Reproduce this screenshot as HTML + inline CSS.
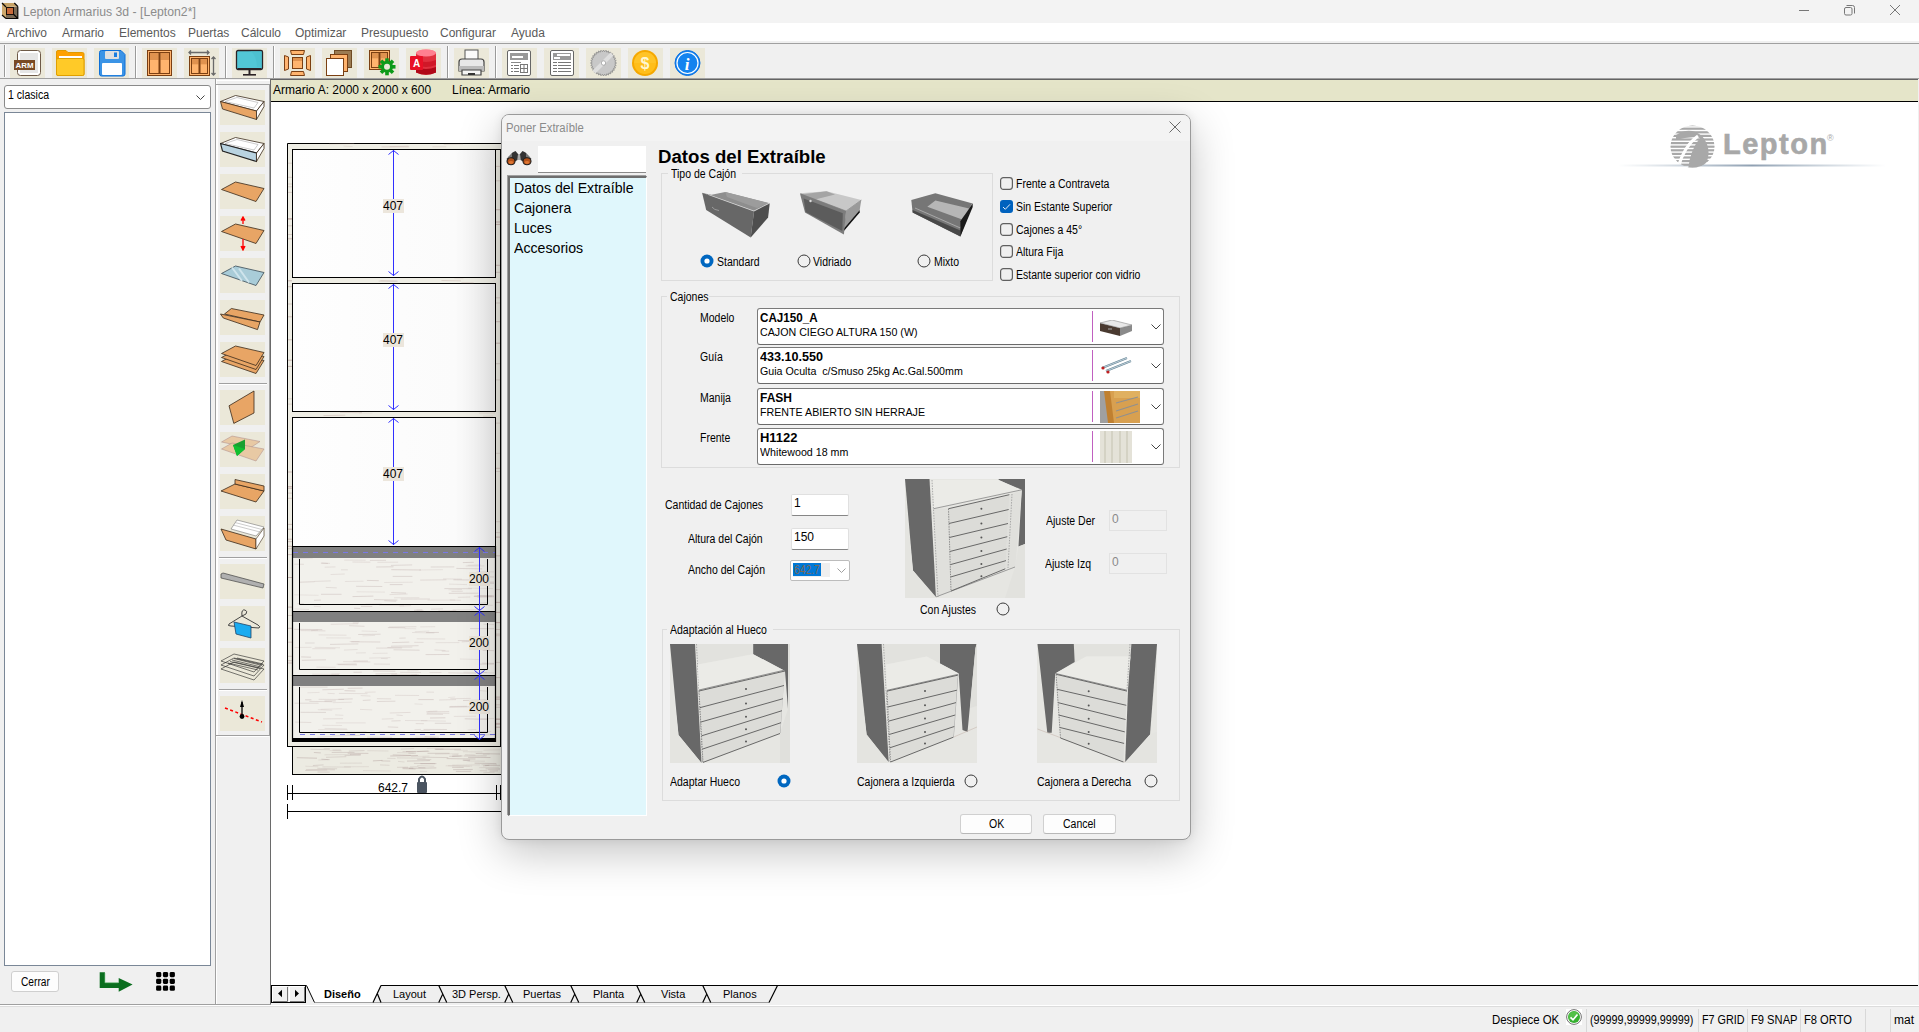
<!DOCTYPE html><html><head><meta charset="utf-8"><style>
*{margin:0;padding:0;box-sizing:border-box}
html,body{width:1919px;height:1032px;overflow:hidden;background:#f0f0f0}
body{font-family:"Liberation Sans",sans-serif;position:relative}
.a{position:absolute}
.t{white-space:nowrap}
</style></head><body>
<div class="a" style="left:0px;top:0px;width:1919px;height:23px;background:#f3f3f3"></div>
<svg class="a" style="left:0;top:0" width="20" height="21" viewBox="0 0 20 21">
<polygon points="2,3 14.3,3 17.8,6.5 6,7" fill="#c6a266"/>
<polygon points="2,3 6,7 6,18.5 2,15" fill="#cda86c"/>
<polygon points="13.5,7 17.8,6.5 17.8,18.5 13.5,14.3" fill="#7a6a55"/>
<polygon points="6,14.3 13.5,14.3 17.8,18.5 6,18.5" fill="#7a6a55"/>
<rect x="6.5" y="7.5" width="7" height="7" fill="#c86a3a" stroke="#1a1008" stroke-width="1"/>
<path d="M2 3 L6 7 M14.3 3 L17.8 6.5 M2 15 L6 18.5 M13.5 14.3 L17.8 18.5 M17.8 6.5 V18.5 H6" stroke="#0a0806" stroke-width="1.2" fill="none"/>
</svg>
<div class="a t" style="left:23px;top:6px;font-size:12px;line-height:12px;color:#8c8c8c;transform:scaleX(1.02);transform-origin:0 0;">Lepton Armarius 3d - [Lepton2*]</div>
<svg class="a" style="left:1795px;top:2px" width="120" height="16" viewBox="0 0 120 16">
<line x1="4" y1="8.5" x2="14" y2="8.5" stroke="#777" stroke-width="1"/>
<rect x="49.5" y="5.5" width="7.5" height="7.5" fill="none" stroke="#777" stroke-width="1" rx="1.5"/>
<path d="M51.5 3.5 H57.5 Q59.5 3.5 59.5 5.5 V11.5" fill="none" stroke="#777" stroke-width="1"/>
<line x1="95" y1="3" x2="105" y2="13" stroke="#777" stroke-width="1"/>
<line x1="105" y1="3" x2="95" y2="13" stroke="#777" stroke-width="1"/>
</svg>
<div class="a" style="left:0px;top:23px;width:1919px;height:18px;background:#fff"></div>
<div class="a" style="left:0px;top:41px;width:1919px;height:2px;background:#f0f0f0"></div>
<div class="a" style="left:0px;top:43px;width:1919px;height:1px;background:#a0a0a0"></div>
<div class="a t" style="left:7px;top:27px;font-size:12px;line-height:12px;color:#5a5a5a;">Archivo</div>
<div class="a t" style="left:62px;top:27px;font-size:12px;line-height:12px;color:#5a5a5a;">Armario</div>
<div class="a t" style="left:119px;top:27px;font-size:12px;line-height:12px;color:#5a5a5a;">Elementos</div>
<div class="a t" style="left:188px;top:27px;font-size:12px;line-height:12px;color:#5a5a5a;">Puertas</div>
<div class="a t" style="left:241px;top:27px;font-size:12px;line-height:12px;color:#5a5a5a;">Cálculo</div>
<div class="a t" style="left:295px;top:27px;font-size:12px;line-height:12px;color:#5a5a5a;">Optimizar</div>
<div class="a t" style="left:361px;top:27px;font-size:12px;line-height:12px;color:#5a5a5a;">Presupuesto</div>
<div class="a t" style="left:440px;top:27px;font-size:12px;line-height:12px;color:#5a5a5a;">Configurar</div>
<div class="a t" style="left:511px;top:27px;font-size:12px;line-height:12px;color:#5a5a5a;">Ayuda</div>
<div class="a" style="left:0px;top:44px;width:1919px;height:34px;background:#f0f0f0"></div>
<div class="a" style="left:0px;top:78px;width:1919px;height:1px;background:#a0a0a0"></div>
<div class="a" style="left:4px;top:45px;width:1px;height:32px;background:#9a9a9a"></div>
<div class="a" style="left:5px;top:45px;width:1px;height:32px;background:#fff"></div>
<div class="a" style="left:10px;top:48px;width:35px;height:30px;background:#ebe8d9"></div>
<div class="a" style="left:52px;top:48px;width:35px;height:30px;background:#ebe8d9"></div>
<div class="a" style="left:94px;top:48px;width:35px;height:30px;background:#ebe8d9"></div>
<div class="a" style="left:142px;top:48px;width:35px;height:30px;background:#ebe8d9"></div>
<div class="a" style="left:184px;top:48px;width:35px;height:30px;background:#ebe8d9"></div>
<div class="a" style="left:232px;top:48px;width:35px;height:30px;background:#ebe8d9"></div>
<div class="a" style="left:280px;top:48px;width:35px;height:30px;background:#ebe8d9"></div>
<div class="a" style="left:322px;top:48px;width:35px;height:30px;background:#ebe8d9"></div>
<div class="a" style="left:364px;top:48px;width:35px;height:30px;background:#ebe8d9"></div>
<div class="a" style="left:406px;top:48px;width:35px;height:30px;background:#ebe8d9"></div>
<div class="a" style="left:454px;top:48px;width:35px;height:30px;background:#ebe8d9"></div>
<div class="a" style="left:502px;top:48px;width:35px;height:30px;background:#ebe8d9"></div>
<div class="a" style="left:544px;top:48px;width:35px;height:30px;background:#ebe8d9"></div>
<div class="a" style="left:586px;top:48px;width:35px;height:30px;background:#ebe8d9"></div>
<div class="a" style="left:628px;top:48px;width:35px;height:30px;background:#ebe8d9"></div>
<div class="a" style="left:670px;top:48px;width:35px;height:30px;background:#ebe8d9"></div>
<div class="a" style="left:135px;top:46px;width:1px;height:32px;background:#9a9a9a"></div>
<div class="a" style="left:136px;top:46px;width:1px;height:32px;background:#fff"></div>
<div class="a" style="left:225px;top:46px;width:1px;height:32px;background:#9a9a9a"></div>
<div class="a" style="left:226px;top:46px;width:1px;height:32px;background:#fff"></div>
<div class="a" style="left:273px;top:46px;width:1px;height:32px;background:#9a9a9a"></div>
<div class="a" style="left:274px;top:46px;width:1px;height:32px;background:#fff"></div>
<div class="a" style="left:447px;top:46px;width:1px;height:32px;background:#9a9a9a"></div>
<div class="a" style="left:448px;top:46px;width:1px;height:32px;background:#fff"></div>
<div class="a" style="left:495px;top:46px;width:1px;height:32px;background:#9a9a9a"></div>
<div class="a" style="left:496px;top:46px;width:1px;height:32px;background:#fff"></div>
<svg class="a" style="left:10px;top:48px;" width="35" height="30" viewBox="0 0 35 30"><rect x="7.5" y="2.5" width="23" height="25" rx="3" fill="#fff" stroke="#6e5a48" stroke-width="1"/>
<rect x="10" y="5" width="18" height="20" fill="#e6e6e6"/>
<rect x="4" y="12" width="21" height="10" fill="#7a4a24"/>
<text x="14.5" y="20.2" font-family="Liberation Sans" font-weight="bold" font-size="8" fill="#fff" text-anchor="middle" textLength="18" lengthAdjust="spacingAndGlyphs">ARM</text></svg>
<svg class="a" style="left:52px;top:48px;" width="35" height="30" viewBox="0 0 35 30"><path d="M4.5 4 Q4.5 2.5 6 2.5 H14 L16 4.5 H30.5 Q32 4.5 32 6 V26 Q32 27.5 30.5 27.5 H6 Q4.5 27.5 4.5 26 Z" fill="#ffa000" stroke="#e09a00" stroke-width="1"/>
<rect x="7" y="8" width="23" height="2" fill="#fff"/>
<path d="M4.5 12 Q4.5 10.5 6 10.5 H30.5 Q32 10.5 32 12 V26 Q32 27.5 30.5 27.5 H6 Q4.5 27.5 4.5 26 Z" fill="#ffca28" stroke="#e0a000" stroke-width="1"/></svg>
<svg class="a" style="left:94px;top:48px;" width="35" height="30" viewBox="0 0 35 30"><path d="M5.5 4.5 Q5.5 2.5 7.5 2.5 H27 L31 6.5 V26 Q31 28 29 28 H7.5 Q5.5 28 5.5 26 Z" fill="#3b94e6" stroke="#0c6fd8" stroke-width="1"/>
<rect x="11" y="3" width="14" height="8" rx="1" fill="#e0e0e0"/>
<rect x="20" y="4.5" width="3" height="4.5" fill="#1a7de0"/>
<rect x="8" y="15" width="20" height="12" rx="1" fill="#fff"/></svg>
<svg class="a" style="left:142px;top:48px;" width="35" height="30" viewBox="0 0 35 30"><rect x="5.5" y="2.5" width="24" height="25" fill="#ffb46e" stroke="#7b3f12" stroke-width="1"/>
<rect x="7.5" y="4.5" width="20" height="21" fill="none" stroke="#7b3f12" stroke-width="1"/>
<rect x="8" y="5" width="8.5" height="7.000000000000001" fill="#e0924f"/>
<rect x="18.5" y="5" width="8.5" height="7.000000000000001" fill="#e0924f"/>
<line x1="17.5" y1="4" x2="17.5" y2="26" stroke="#7b3f12" stroke-width="2"/></svg>
<svg class="a" style="left:184px;top:48px;" width="35" height="30" viewBox="0 0 35 30"><rect x="5.5" y="8.5" width="20" height="19" fill="#ffb46e" stroke="#7b3f12" stroke-width="1"/>
<rect x="7.5" y="10.5" width="16" height="15" fill="none" stroke="#7b3f12" stroke-width="1"/>
<rect x="8" y="11" width="6.5" height="5.32" fill="#e0924f"/>
<rect x="16.5" y="11" width="6.5" height="5.32" fill="#e0924f"/>
<line x1="15.5" y1="10" x2="15.5" y2="26" stroke="#7b3f12" stroke-width="2"/><path d="M5 4.5 H25 M7 2.5 L5 4.5 L7 6.5 M23 2.5 L25 4.5 L23 6.5" stroke="#6a6a6a" stroke-width="1.3" fill="none"/>
<path d="M29.5 9 V27 M27.5 11 L29.5 9 L31.5 11 M27.5 25 L29.5 27 L31.5 25" stroke="#6a6a6a" stroke-width="1.3" fill="none"/></svg>
<svg class="a" style="left:232px;top:48px;" width="35" height="30" viewBox="0 0 35 30"><rect x="4.5" y="2.5" width="26" height="19" rx="1.5" fill="#52c6d6" stroke="#2b2226" stroke-width="1.3"/>
<path d="M5.5 20 H29.5 V22 H5.5Z" fill="#2b2226"/>
<path d="M15.5 3 Q24 3 25 19 H29.5 V3Z" fill="#4bbccc" opacity=".6"/>
<rect x="16.5" y="22" width="2" height="4" fill="#2b2226"/>
<rect x="11" y="26" width="13" height="1.6" fill="#2b2226"/></svg>
<svg class="a" style="left:280px;top:48px;" width="35" height="30" viewBox="0 0 35 30"><g fill="#ffb46e" stroke="#7b3f12" stroke-width="1">
<rect x="12.5" y="9.5" width="10" height="11"/>
<path d="M10.5 2.5 H24.5 L23.5 6.5 H11.5Z"/><path d="M10.5 27.5 H24.5 L23.5 23.5 H11.5Z"/>
<path d="M4.5 7.5 L8.5 9 V21 L4.5 22.5Z"/><path d="M30.5 7.5 L26.5 9 V21 L30.5 22.5Z"/></g>
<rect x="13" y="10" width="9" height="3" fill="#e0924f"/></svg>
<svg class="a" style="left:322px;top:48px;" width="35" height="30" viewBox="0 0 35 30"><rect x="12.5" y="2.5" width="17" height="17" fill="#9b7b52" stroke="#6e4a24"/>
<rect x="8.5" y="6.5" width="17" height="17" fill="#ffb46e" stroke="#7b3f12"/>
<rect x="4.5" y="10.5" width="17" height="17" fill="#fff" stroke="#7b3f12"/></svg>
<svg class="a" style="left:364px;top:48px;" width="35" height="30" viewBox="0 0 35 30"><rect x="5.5" y="2.5" width="20" height="19" fill="#ffb46e" stroke="#7b3f12" stroke-width="1"/>
<rect x="7.5" y="4.5" width="16" height="15" fill="none" stroke="#7b3f12" stroke-width="1"/>
<rect x="8" y="5" width="6.5" height="5.32" fill="#e0924f"/>
<rect x="16.5" y="5" width="6.5" height="5.32" fill="#e0924f"/>
<line x1="15.5" y1="4" x2="15.5" y2="20" stroke="#7b3f12" stroke-width="2"/><g transform="translate(23,18.8)"><rect x="-1.8" y="-8.5" width="3.6" height="4" fill="#0e9a1a" transform="rotate(0)"/><rect x="-1.8" y="-8.5" width="3.6" height="4" fill="#0e9a1a" transform="rotate(45)"/><rect x="-1.8" y="-8.5" width="3.6" height="4" fill="#0e9a1a" transform="rotate(90)"/><rect x="-1.8" y="-8.5" width="3.6" height="4" fill="#0e9a1a" transform="rotate(135)"/><rect x="-1.8" y="-8.5" width="3.6" height="4" fill="#0e9a1a" transform="rotate(180)"/><rect x="-1.8" y="-8.5" width="3.6" height="4" fill="#0e9a1a" transform="rotate(225)"/><rect x="-1.8" y="-8.5" width="3.6" height="4" fill="#0e9a1a" transform="rotate(270)"/><rect x="-1.8" y="-8.5" width="3.6" height="4" fill="#0e9a1a" transform="rotate(315)"/><circle r="6" fill="#0e9a1a"/><circle r="3" fill="#ebe8d9"/></g></svg>
<svg class="a" style="left:406px;top:48px;" width="35" height="30" viewBox="0 0 35 30"><ellipse cx="20" cy="5" rx="10" ry="3.5" fill="#ff7a8a"/>
<path d="M10 5 V24.5 Q20 29 30 24.5 V5 Q20 9 10 5Z" fill="#e0303e"/>
<path d="M10 12 Q20 16 30 12 V17 Q20 21 10 17Z" fill="#d01828"/>
<path d="M10 19 Q20 23 30 19 V24.5 Q20 29 10 24.5Z" fill="#b00818"/>
<ellipse cx="20" cy="5" rx="10" ry="3.5" fill="#ff8090"/>
<rect x="4" y="8" width="13" height="14" rx="1" fill="#e81026"/>
<text x="10.5" y="19" font-family="Liberation Sans" font-weight="bold" font-size="10" fill="#fff" text-anchor="middle">A</text></svg>
<svg class="a" style="left:454px;top:48px;" width="35" height="30" viewBox="0 0 35 30"><rect x="11" y="2" width="13" height="10" fill="#fafafa" stroke="#555" stroke-width="1"/>
<path d="M5 14 Q5 11 8 11 H27 Q30 11 30 14 V23 H5Z" fill="#e8e8e8" stroke="#444" stroke-width="1.2"/>
<rect x="5" y="18" width="25" height="5" fill="#bbb"/>
<path d="M8 22 H27 V27 H8Z" fill="#f5f5f5" stroke="#444" stroke-width="1.2"/>
<rect x="14" y="25" width="7" height="2" fill="#333"/></svg>
<svg class="a" style="left:502px;top:48px;" width="35" height="30" viewBox="0 0 35 30"><rect x="5.5" y="2.5" width="23" height="25" rx="1.5" fill="#fff" stroke="#666"/>
<rect x="8" y="5" width="18" height="7" fill="#999"/><rect x="10" y="8" width="11" height="2" fill="#fff"/>
<rect x="9" y="14" width="10" height="1" fill="#888"/>
<g fill="#777"><rect x="9" y="17" width="2" height="1"/><rect x="12" y="17" width="5" height="1"/><rect x="9" y="20" width="2" height="1"/><rect x="12" y="20" width="5" height="1"/><rect x="9" y="23" width="2" height="1"/><rect x="12" y="23" width="5" height="1"/></g>
<rect x="18.5" y="16.5" width="7" height="8" fill="none" stroke="#777"/><line x1="22" y1="17" x2="22" y2="24" stroke="#777"/><line x1="19" y1="20.5" x2="25" y2="20.5" stroke="#777"/></svg>
<svg class="a" style="left:544px;top:48px;" width="35" height="30" viewBox="0 0 35 30"><rect x="6.5" y="2.5" width="23" height="25" rx="1.5" fill="#fff" stroke="#666"/>
<rect x="9" y="5" width="18" height="7" fill="#999"/><rect x="13" y="6" width="13" height="2" fill="#fff"/><rect x="10" y="9" width="6" height="2" fill="#fff"/>
<g fill="#777"><rect x="9" y="14" width="4" height="1"/><rect x="14" y="14" width="13" height="1"/><rect x="9" y="17" width="4" height="1"/><rect x="14" y="17" width="13" height="1"/><rect x="9" y="20" width="4" height="1"/><rect x="14" y="20" width="13" height="1"/><rect x="9" y="23" width="4" height="1"/><rect x="14" y="23" width="13" height="1"/></g></svg>
<svg class="a" style="left:586px;top:48px;" width="35" height="30" viewBox="0 0 35 30"><polygon points="30.50,15.00 28.75,16.11 30.25,17.54 28.31,18.28 29.51,19.97 27.47,20.33 28.31,22.22 26.24,22.17 26.69,24.19 24.67,23.74 24.72,25.81 22.83,24.97 22.47,27.01 20.78,25.81 20.04,27.75 18.61,26.25 17.50,28.00 16.39,26.25 14.96,27.75 14.22,25.81 12.53,27.01 12.17,24.97 10.28,25.81 10.33,23.74 8.31,24.19 8.76,22.17 6.69,22.22 7.53,20.33 5.49,19.97 6.69,18.28 4.75,17.54 6.25,16.11 4.50,15.00 6.25,13.89 4.75,12.46 6.69,11.72 5.49,10.03 7.53,9.67 6.69,7.78 8.76,7.83 8.31,5.81 10.33,6.26 10.28,4.19 12.17,5.03 12.53,2.99 14.22,4.19 14.96,2.25 16.39,3.75 17.50,2.00 18.61,3.75 20.04,2.25 20.78,4.19 22.47,2.99 22.83,5.03 24.72,4.19 24.67,6.26 26.69,5.81 26.24,7.83 28.31,7.78 27.47,9.67 29.51,10.03 28.31,11.72 30.25,12.46 28.75,13.89" fill="#c8c8c8" stroke="#888" stroke-width=".8"/>
<path d="M8 24 L26 6" stroke="#dedede" stroke-width="4"/>
<circle cx="17.5" cy="15" r="2.2" fill="#fff" stroke="#888" stroke-width=".6"/></svg>
<svg class="a" style="left:628px;top:48px;" width="35" height="30" viewBox="0 0 35 30"><circle cx="17" cy="15" r="13" fill="#f5a800"/>
<circle cx="17" cy="15" r="11" fill="#ffbe1a"/>
<path d="M6 15 A11 11 0 0 1 28 15 Z" fill="#ffc933" opacity=".5"/>
<text x="17" y="21" font-family="Liberation Sans" font-weight="bold" font-size="16" fill="#fff7d0" text-anchor="middle">$</text></svg>
<svg class="a" style="left:670px;top:48px;" width="35" height="30" viewBox="0 0 35 30"><circle cx="17.5" cy="15" r="12.5" fill="#1483ef" stroke="#0b6fe0" stroke-width="1"/>
<circle cx="17.5" cy="15" r="10.5" fill="none" stroke="#fff" stroke-width="1.2"/>
<text x="17" y="21.5" font-family="Liberation Serif" font-style="italic" font-weight="bold" font-size="17" fill="#fff" text-anchor="middle">i</text></svg>
<div class="a" style="left:0px;top:79px;width:215px;height:925px;background:#f0f0f0"></div>
<div class="a" style="left:4px;top:85px;width:207px;height:24px;background:#fff;border:1px solid #8a8a8a;border-radius:3px"></div>
<div class="a t" style="left:8px;top:89px;font-size:12px;line-height:12px;color:#000;transform:scaleX(0.88);transform-origin:0 0;">1 clasica</div>
<svg class="a" style="left:195px;top:94px;" width="12" height="8" viewBox="0 0 12 8"><path d="M1.5 1.5 L5.5 5.5 L9.5 1.5" fill="none" stroke="#444" stroke-width="1"/></svg>
<div class="a" style="left:4px;top:112px;width:207px;height:854px;background:#fff;border:1px solid #7a8797"></div>
<div class="a" style="left:11px;top:971px;width:48px;height:21px;background:#fdfdfd;border:1px solid #cfcfcf;border-radius:3px"></div>
<div class="a t" style="left:21px;top:976px;font-size:12px;line-height:12px;color:#000;transform:scaleX(0.85);transform-origin:0 0;">Cerrar</div>
<svg class="a" style="left:98px;top:970px;" width="38" height="24" viewBox="0 0 38 24"><path d="M1.7 2.2 H6.9 V12.8 H20.7 V8 L34.6 14.6 L20.7 21.8 V18 H1.7 Z" fill="#0b6e1f"/><path d="M6.9 3 V12.8 H20" stroke="#5fc070" stroke-width=".8" fill="none" opacity=".6"/></svg>
<svg class="a" style="left:154px;top:970px;" width="24" height="24" viewBox="0 0 24 24"><rect x="2.1" y="2.0" width="5.2" height="5.2" rx="1.4" fill="#000"/><rect x="8.9" y="2.0" width="5.2" height="5.2" rx="1.4" fill="#000"/><rect x="15.7" y="2.0" width="5.2" height="5.2" rx="1.4" fill="#000"/><rect x="2.1" y="8.8" width="5.2" height="5.2" rx="1.4" fill="#000"/><rect x="8.9" y="8.8" width="5.2" height="5.2" rx="1.4" fill="#000"/><rect x="15.7" y="8.8" width="5.2" height="5.2" rx="1.4" fill="#000"/><rect x="2.1" y="15.6" width="5.2" height="5.2" rx="1.4" fill="#000"/><rect x="8.9" y="15.6" width="5.2" height="5.2" rx="1.4" fill="#000"/><rect x="15.7" y="15.6" width="5.2" height="5.2" rx="1.4" fill="#000"/></svg>
<div class="a" style="left:215px;top:79px;width:1px;height:925px;background:#a0a0a0"></div>
<div class="a" style="left:216px;top:79px;width:1px;height:925px;background:#fff"></div>
<div class="a" style="left:217px;top:79px;width:53px;height:925px;background:#f0f0f0"></div>
<div class="a" style="left:217px;top:80px;width:53px;height:1px;background:#fff"></div>
<div class="a" style="left:216px;top:84px;width:54px;height:1px;background:#a0a0a0"></div>
<div class="a" style="left:217px;top:85px;width:1px;height:650px;background:#fff"></div>
<div class="a" style="left:269px;top:84px;width:1px;height:651px;background:#a0a0a0"></div>
<div class="a" style="left:216px;top:735px;width:54px;height:1px;background:#a0a0a0"></div>
<div class="a" style="left:217px;top:736px;width:52px;height:1px;background:#fff"></div>
<div class="a" style="left:270px;top:79px;width:1px;height:925px;background:#6a6a6a"></div>
<div class="a" style="left:219px;top:383px;width:48px;height:1px;background:#a0a0a0"></div>
<div class="a" style="left:219px;top:384px;width:48px;height:1px;background:#fff"></div>
<div class="a" style="left:219px;top:557px;width:48px;height:1px;background:#a0a0a0"></div>
<div class="a" style="left:219px;top:558px;width:48px;height:1px;background:#fff"></div>
<div class="a" style="left:219px;top:689px;width:48px;height:1px;background:#a0a0a0"></div>
<div class="a" style="left:219px;top:690px;width:48px;height:1px;background:#fff"></div>
<div class="a" style="left:220px;top:90px;width:45px;height:35px;background:#ebe8d9"></div>
<div class="a" style="left:220px;top:132px;width:45px;height:35px;background:#ebe8d9"></div>
<div class="a" style="left:220px;top:174px;width:45px;height:35px;background:#ebe8d9"></div>
<div class="a" style="left:220px;top:216px;width:45px;height:35px;background:#ebe8d9"></div>
<div class="a" style="left:220px;top:258px;width:45px;height:35px;background:#ebe8d9"></div>
<div class="a" style="left:220px;top:300px;width:45px;height:35px;background:#ebe8d9"></div>
<div class="a" style="left:220px;top:342px;width:45px;height:35px;background:#ebe8d9"></div>
<div class="a" style="left:220px;top:390px;width:45px;height:35px;background:#ebe8d9"></div>
<div class="a" style="left:220px;top:432px;width:45px;height:35px;background:#ebe8d9"></div>
<div class="a" style="left:220px;top:474px;width:45px;height:35px;background:#ebe8d9"></div>
<div class="a" style="left:220px;top:516px;width:45px;height:35px;background:#ebe8d9"></div>
<div class="a" style="left:220px;top:564px;width:45px;height:35px;background:#ebe8d9"></div>
<div class="a" style="left:220px;top:606px;width:45px;height:35px;background:#ebe8d9"></div>
<div class="a" style="left:220px;top:648px;width:45px;height:35px;background:#ebe8d9"></div>
<div class="a" style="left:220px;top:696px;width:45px;height:35px;background:#ebe8d9"></div>
<svg class="a" style="left:220px;top:90px;" width="45" height="35" viewBox="0 0 45 35"><polygon points="15.5,5.5 44,11.5 36.5,21 0.5,11.5" fill="#fff" stroke="#3a2a1a" stroke-width=".8"/>
<polygon points="5,11.5 17,7.5 38,12.5 34,18" fill="#fff" stroke="#aaa" stroke-width=".6"/>
<polygon points="0.5,11.5 36.5,21 36.5,29.5 2.5,19" fill="#e8a565" stroke="#3a2a1a" stroke-width=".8"/>
<polygon points="36.5,21 44,11.5 44,16.5 36.5,29.5" fill="#fff" stroke="#3a2a1a" stroke-width=".8"/></svg>
<svg class="a" style="left:220px;top:132px;" width="45" height="35" viewBox="0 0 45 35"><polygon points="15.5,5.5 44,11.5 36.5,21 0.5,11.5" fill="#fff" stroke="#3a2a1a" stroke-width=".8"/>
<polygon points="5,11.5 17,7.5 38,12.5 34,18" fill="#fff" stroke="#aaa" stroke-width=".6"/>
<polygon points="0.5,11.5 36.5,21 36.5,29.5 2.5,19" fill="#b9d3e0" stroke="#222" stroke-width="1.1"/>
<polygon points="36.5,21 44,11.5 44,16.5 36.5,29.5" fill="#fff" stroke="#3a2a1a" stroke-width=".8"/></svg>
<svg class="a" style="left:220px;top:174px;" width="45" height="35" viewBox="0 0 45 35"><polygon points="1.5,15.5 15.5,8 44,14.5 36,27.5" fill="#e8a565" stroke="#3a2a1a" stroke-width=".8"/></svg>
<svg class="a" style="left:220px;top:216px;" width="45" height="35" viewBox="0 0 45 35"><polygon points="1.5,15.5 15.5,8 44,14.5 36,27.5" fill="#e8a565" stroke="#3a2a1a" stroke-width=".8"/><path d="M23 2 V8 M21 4.5 L23 1 L25 4.5 M23 23 V33 M21 30 L23 34 L25 30" stroke="#f00" stroke-width="1.3" fill="#f00"/></svg>
<svg class="a" style="left:220px;top:258px;" width="45" height="35" viewBox="0 0 45 35"><polygon points="1.5,15.5 15.5,8 44,14.5 36,27.5" fill="#a9ccd8" stroke="#3a4a55" stroke-width=".8"/><path d="M12 9.5 L22 23 M19 10.5 L29 24.5" stroke="#cfe4ec" stroke-width="2"/></svg>
<svg class="a" style="left:220px;top:300px;" width="45" height="35" viewBox="0 0 45 35"><polygon points="11.4,8.5 44,15 40,22 4.5,14" fill="#e8a565" stroke="#3a2a1a" stroke-width=".8"/><polygon points="0.5,14 40,22 37.5,29.6 3.3,18" fill="#e8a565" stroke="#3a2a1a" stroke-width=".8"/></svg>
<svg class="a" style="left:220px;top:342px;" width="45" height="35" viewBox="0 0 45 35"><polygon points="1.5,19.5 15.5,12 44,18.5 36,31.5" fill="#e8a565" stroke="#3a2a1a" stroke-width=".8"/>
<polygon points="1.5,15.5 15.5,8 44,14.5 36,27.5" fill="#e8a565" stroke="#3a2a1a" stroke-width=".8"/>
<polygon points="1.5,11.5 15.5,4 44,10.5 36,23.5" fill="#e8a565" stroke="#3a2a1a" stroke-width=".8"/></svg>
<svg class="a" style="left:220px;top:390px;" width="45" height="35" viewBox="0 0 45 35"><polygon points="9,15.8 34,1 34,23 13.8,33.4" fill="#e8a565" stroke="#3a2a1a" stroke-width=".8"/></svg>
<svg class="a" style="left:220px;top:432px;" width="45" height="35" viewBox="0 0 45 35"><polygon points="1.5,10 12,4 40,9.5 30,16" fill="#e8c9a4" stroke="#a88" stroke-width=".5"/>
<polygon points="1.5,17 12,11 44,17 36,29" fill="#e8c9a4" stroke="#a88" stroke-width=".5"/>
<polygon points="13,13 25,7.5 25,17 17,24" fill="#18a030"/><polygon points="13,13 25,17 17,24" fill="#10c030"/></svg>
<svg class="a" style="left:220px;top:474px;" width="45" height="35" viewBox="0 0 45 35"><polygon points="1,17 15,10 44,17 36,28" fill="#e8a565" stroke="#3a2a1a" stroke-width=".8"/><polygon points="15,5.5 44,12 44,17 15,10" fill="#e8a565" stroke="#3a2a1a" stroke-width=".8"/></svg>
<svg class="a" style="left:220px;top:516px;" width="45" height="35" viewBox="0 0 45 35"><polygon points="17,4 44,11 36,20 11,13" fill="#fff" stroke="#777" stroke-width=".6"/>
<path d="M13 9 L40 16 M15 6.5 L42 13.5" stroke="#aaa" stroke-width=".6"/>
<polygon points="1,13 36,23 36,33 6,24" fill="#e8a565" stroke="#3a2a1a" stroke-width=".8"/>
<polygon points="36,23 44,12 44,20 36,33" fill="#fff" stroke="#3a2a1a" stroke-width=".6"/></svg>
<svg class="a" style="left:220px;top:564px;" width="45" height="35" viewBox="0 0 45 35"><polygon points="1,10 3,9 44,20 43,24 1,14" fill="#b0b0b0" stroke="#444" stroke-width=".7"/></svg>
<svg class="a" style="left:220px;top:606px;" width="45" height="35" viewBox="0 0 45 35"><path d="M22 10 Q21 3 25 4 Q28 5 26 8 L22 10 L9 18 Q7 20 11 20 L39 22 Q41 21 38 19 Z" fill="none" stroke="#333" stroke-width=".9"/>
<polygon points="14,16 31,20 31,32 16,28" fill="#1aabf0" stroke="#246" stroke-width=".8"/></svg>
<svg class="a" style="left:220px;top:648px;" width="45" height="35" viewBox="0 0 45 35"><g fill="none" stroke="#222" stroke-width=".6"><polygon points="1,13 14,6 44,13 34,24"/><polygon points="1,17 14,10 44,17 34,28"/><polygon points="1,21 14,14 44,21 34,32"/>
<path d="M8 15 L38 22 M10 13.5 L40 20.5 M12 12 L41 19 M14 10.5 L42 17.5 M17 10 L43 16"/></g></svg>
<svg class="a" style="left:220px;top:696px;" width="45" height="35" viewBox="0 0 45 35"><path d="M5 12 L42 26" stroke="#f00" stroke-width="1.5" stroke-dasharray="3,2.5"/><path d="M22 20 V6" stroke="#000" stroke-width="1.3"/><polygon points="20,11 22,4 24,11" fill="#000"/><circle cx="22" cy="20.5" r="2.4" fill="#000"/></svg>
<div class="a" style="left:271px;top:79px;width:1648px;height:1px;background:#646464"></div>
<div class="a" style="left:271px;top:80px;width:1648px;height:21px;background:#e5e5c9"></div>
<div class="a" style="left:271px;top:101px;width:1648px;height:1px;background:#000"></div>
<div class="a t" style="left:273px;top:84px;font-size:12px;line-height:12px;color:#000;">Armario A: 2000 x 2000 x 600</div>
<div class="a t" style="left:452px;top:84px;font-size:12px;line-height:12px;color:#000;">Línea: Armario</div>
<div class="a" style="left:271px;top:102px;width:1647px;height:883px;background:#fff"></div>
<div class="a" style="left:1918px;top:79px;width:1px;height:925px;background:#f0f0f0"></div>
<svg class="a" style="left:0;top:0" width="1919" height="1032" viewBox="0 0 1919 1032">
<defs><clipPath id="lc"><ellipse cx="1692.5" cy="146.5" rx="22" ry="21"/></clipPath>
<linearGradient id="lg" x1="0" x2="1"><stop offset="0" stop-color="#9fb0c0" stop-opacity="0"/><stop offset=".5" stop-color="#8fa0b2"/><stop offset="1" stop-color="#9fb0c0" stop-opacity="0"/></linearGradient></defs>
<rect x="1618" y="164.5" width="268" height="2" fill="url(#lg)"/>
<g clip-path="url(#lc)"><rect x="1668" y="124.0" width="50" height="2.2" fill="#a8a8a8"/><rect x="1668" y="127.6" width="50" height="2.2" fill="#a8a8a8"/><rect x="1668" y="131.2" width="50" height="2.2" fill="#a8a8a8"/><rect x="1668" y="134.8" width="50" height="2.2" fill="#a8a8a8"/><rect x="1668" y="138.4" width="50" height="2.2" fill="#a8a8a8"/><rect x="1668" y="142.0" width="50" height="2.2" fill="#a8a8a8"/><rect x="1668" y="145.6" width="50" height="2.2" fill="#a8a8a8"/><rect x="1668" y="149.2" width="50" height="2.2" fill="#a8a8a8"/><rect x="1668" y="152.8" width="50" height="2.2" fill="#a8a8a8"/><rect x="1668" y="156.4" width="50" height="2.2" fill="#a8a8a8"/><rect x="1668" y="160.0" width="50" height="2.2" fill="#a8a8a8"/><rect x="1668" y="163.6" width="50" height="2.2" fill="#a8a8a8"/><rect x="1668" y="167.2" width="50" height="2.2" fill="#a8a8a8"/>
<path d="M1676 135 Q1690 126 1702 136 Q1714 150 1704 168 L1688 170 Q1690 150 1700 138 Q1690 136 1676 140Z" fill="#a8a8a8"/>
<path d="M1678 168 Q1684 146 1698 136" stroke="#fff" stroke-width="3" fill="none"/>
</g></svg>
<div class="a t" style="left:1723px;top:130px;font-size:29px;line-height:29px;color:#a8a8a8;font-weight:bold;letter-spacing:1.5px;-webkit-text-stroke:.6px #a8a8a8">Lepton</div>
<div class="a t" style="left:1827px;top:134px;font-size:9px;line-height:9px;color:#a8a8a8;">®</div>
<div class="a" style="left:271px;top:985px;width:1647px;height:20px;background:#f0f0f0"></div>
<div class="a" style="left:271px;top:985px;width:1647px;height:1px;background:#000"></div>
<svg class="a" style="left:0;top:0" width="1919" height="1032" viewBox="0 0 1919 1032">
<polygon points="306.5,985 315,1002.5 373,1002.5 381,985" fill="#fff"/>
<rect x="306.5" y="984" width="74" height="2" fill="#fff"/>
<polygon points="381,986 377.5,994 380.5,1002.5 768.75,1002.5 777.5,986" fill="#efefef"/>
<path d="M306.5 985.5 L314.5 1002.5 H769" stroke="#000" stroke-width="1" fill="none"/>
<path d="M314.5 1002.5 H769" stroke="#a0a0a0" stroke-width="1.2" fill="none"/>
<path d="M373 1002.5 L381 985.5 M377.5 994 L381 1002.5 M769 1002.5 L777.5 985.5" stroke="#000" stroke-width="1.2" fill="none"/>
<path d="M438.75 985.5 L446.75 1002.5 M438.75 1002.5 L442.75 994" stroke="#000" stroke-width="1.2" fill="none"/><path d="M504.75 985.5 L512.75 1002.5 M504.75 1002.5 L508.75 994" stroke="#000" stroke-width="1.2" fill="none"/><path d="M570.75 985.5 L578.75 1002.5 M570.75 1002.5 L574.75 994" stroke="#000" stroke-width="1.2" fill="none"/><path d="M636.75 985.5 L644.75 1002.5 M636.75 1002.5 L640.75 994" stroke="#000" stroke-width="1.2" fill="none"/><path d="M702.75 985.5 L710.75 1002.5 M702.75 1002.5 L706.75 994" stroke="#000" stroke-width="1.2" fill="none"/><rect x="271" y="985" width="35" height="18" fill="#000"/>
<rect x="272" y="986" width="17" height="16" fill="#f0f0f0"/><rect x="289" y="986" width="16" height="16" fill="#f0f0f0"/>
<path d="M272.5 1001 V986.5 H287 M289.5 1001 V986.5 H304" stroke="#fff" stroke-width="1" fill="none"/>
<path d="M273 1001.5 H287.5 V987 M290 1001.5 H304.5 V987" stroke="#777" stroke-width="1" fill="none"/>
<polygon points="278,993.5 282,989.8 282,997.2" fill="#000"/>
<polygon points="299,993.5 295,989.8 295,997.2" fill="#000"/>
</svg>
<div class="a t" style="left:324px;top:989px;font-size:11px;line-height:11px;color:#000;font-weight:bold;">Diseño</div>
<div class="a t" style="left:393px;top:989px;font-size:11px;line-height:11px;color:#000;">Layout</div>
<div class="a t" style="left:452px;top:989px;font-size:11px;line-height:11px;color:#000;">3D Persp.</div>
<div class="a t" style="left:523px;top:989px;font-size:11px;line-height:11px;color:#000;">Puertas</div>
<div class="a t" style="left:593px;top:989px;font-size:11px;line-height:11px;color:#000;">Planta</div>
<div class="a t" style="left:661px;top:989px;font-size:11px;line-height:11px;color:#000;">Vista</div>
<div class="a t" style="left:723px;top:989px;font-size:11px;line-height:11px;color:#000;">Planos</div>
<div class="a" style="left:0px;top:1004px;width:271px;height:1px;background:#a0a0a0"></div>
<div class="a" style="left:0px;top:1005px;width:1919px;height:1px;background:#fff"></div>
<div class="a" style="left:0px;top:1006px;width:1919px;height:1px;background:#dcdcdc"></div>
<div class="a" style="left:0px;top:1007px;width:1919px;height:25px;background:#f0f0f0"></div>
<div class="a" style="left:1586px;top:1009px;width:1px;height:23px;background:#d8d8d8"></div>
<div class="a" style="left:1698px;top:1009px;width:1px;height:23px;background:#d8d8d8"></div>
<div class="a" style="left:1747px;top:1009px;width:1px;height:23px;background:#d8d8d8"></div>
<div class="a" style="left:1800px;top:1009px;width:1px;height:23px;background:#d8d8d8"></div>
<div class="a" style="left:1865px;top:1009px;width:1px;height:23px;background:#d8d8d8"></div>
<div class="a" style="left:1890px;top:1009px;width:1px;height:23px;background:#d8d8d8"></div>
<div class="a t" style="left:1492px;top:1014px;font-size:12px;line-height:12px;color:#000;transform:scaleX(0.95);transform-origin:0 0;">Despiece OK</div>
<svg class="a" style="left:1566px;top:1009px;" width="16" height="16" viewBox="0 0 16 16"><rect width="16" height="16" fill="#fff"/>
<circle cx="8" cy="8" r="7.4" fill="#fff" stroke="#707070" stroke-width="1"/>
<circle cx="8" cy="8" r="6" fill="#36b030"/>
<path d="M2.5 8 A6 6 0 0 1 13 4.5 L3 11Z" fill="#6fd060" opacity=".5"/>
<path d="M4.5 8.3 L7 10.8 L11.5 5.5" stroke="#fff" stroke-width="1.7" fill="none"/></svg>
<div class="a t" style="left:1590px;top:1014px;font-size:12px;line-height:12px;color:#000;transform:scaleX(0.9);transform-origin:0 0;">(99999,99999,99999)</div>
<div class="a t" style="left:1702px;top:1014px;font-size:12px;line-height:12px;color:#000;transform:scaleX(0.9);transform-origin:0 0;">F7 GRID</div>
<div class="a t" style="left:1751px;top:1014px;font-size:12px;line-height:12px;color:#000;transform:scaleX(0.93);transform-origin:0 0;">F9 SNAP</div>
<div class="a t" style="left:1804px;top:1014px;font-size:12px;line-height:12px;color:#000;transform:scaleX(0.93);transform-origin:0 0;">F8 ORTO</div>
<div class="a t" style="left:1894px;top:1014px;font-size:12px;line-height:12px;color:#000;">mat</div>
<svg class="a" style="left:0;top:0" width="1919" height="1032" viewBox="0 0 1919 1032"><defs><linearGradient id="ig" x1="0" x2="1"><stop offset="0" stop-color="#fefefe"/><stop offset=".8" stop-color="#fbfbfb"/><stop offset="1" stop-color="#f1f1f1"/></linearGradient></defs><rect x="287" y="143" width="214" height="604" fill="#eeede4"/><path d="M287.5 747 V143.5 H501" stroke="#000" stroke-width="1" fill="none"/><line x1="500.5" y1="149" x2="500.5" y2="747" stroke="#000" stroke-width="1"/><line x1="495" y1="149.5" x2="501" y2="149.5" stroke="#000" stroke-width="1"/><line x1="288" y1="339.8" x2="292" y2="339.8" stroke="#a07878" stroke-opacity="0.40" stroke-width="1"/><line x1="288" y1="192.4" x2="292" y2="192.4" stroke="#a07878" stroke-opacity="0.31" stroke-width="1"/><line x1="288" y1="184.0" x2="292" y2="184.0" stroke="#a07878" stroke-opacity="0.21" stroke-width="1"/><line x1="288" y1="404.1" x2="292" y2="404.1" stroke="#a07878" stroke-opacity="0.23" stroke-width="1"/><line x1="288" y1="398.8" x2="292" y2="398.8" stroke="#a07878" stroke-opacity="0.24" stroke-width="1"/><line x1="288" y1="280.8" x2="292" y2="280.8" stroke="#a07878" stroke-opacity="0.48" stroke-width="1"/><line x1="288" y1="488.2" x2="292" y2="488.2" stroke="#a07878" stroke-opacity="0.49" stroke-width="1"/><line x1="288" y1="177.3" x2="292" y2="177.3" stroke="#a07878" stroke-opacity="0.29" stroke-width="1"/><line x1="288" y1="234.5" x2="292" y2="234.5" stroke="#a07878" stroke-opacity="0.29" stroke-width="1"/><line x1="288" y1="628.3" x2="292" y2="628.3" stroke="#a07878" stroke-opacity="0.37" stroke-width="1"/><line x1="288" y1="524.4" x2="292" y2="524.4" stroke="#a07878" stroke-opacity="0.36" stroke-width="1"/><line x1="288" y1="186.8" x2="292" y2="186.8" stroke="#a07878" stroke-opacity="0.26" stroke-width="1"/><line x1="288" y1="548.7" x2="292" y2="548.7" stroke="#a07878" stroke-opacity="0.29" stroke-width="1"/><line x1="288" y1="493.1" x2="292" y2="493.1" stroke="#a07878" stroke-opacity="0.29" stroke-width="1"/><line x1="288" y1="615.5" x2="292" y2="615.5" stroke="#a07878" stroke-opacity="0.27" stroke-width="1"/><line x1="288" y1="486.6" x2="292" y2="486.6" stroke="#a07878" stroke-opacity="0.46" stroke-width="1"/><line x1="288" y1="577.5" x2="292" y2="577.5" stroke="#a07878" stroke-opacity="0.49" stroke-width="1"/><line x1="288" y1="219.2" x2="292" y2="219.2" stroke="#a07878" stroke-opacity="0.43" stroke-width="1"/><line x1="288" y1="239.1" x2="292" y2="239.1" stroke="#a07878" stroke-opacity="0.21" stroke-width="1"/><line x1="288" y1="541.6" x2="292" y2="541.6" stroke="#a07878" stroke-opacity="0.37" stroke-width="1"/><line x1="288" y1="663.0" x2="292" y2="663.0" stroke="#a07878" stroke-opacity="0.41" stroke-width="1"/><line x1="288" y1="498.3" x2="292" y2="498.3" stroke="#a07878" stroke-opacity="0.34" stroke-width="1"/><line x1="288" y1="642.2" x2="292" y2="642.2" stroke="#a07878" stroke-opacity="0.34" stroke-width="1"/><line x1="288" y1="539.2" x2="292" y2="539.2" stroke="#a07878" stroke-opacity="0.41" stroke-width="1"/><line x1="288" y1="529.2" x2="292" y2="529.2" stroke="#a07878" stroke-opacity="0.45" stroke-width="1"/><line x1="288" y1="316.8" x2="292" y2="316.8" stroke="#a07878" stroke-opacity="0.40" stroke-width="1"/><line x1="288" y1="163.2" x2="292" y2="163.2" stroke="#a07878" stroke-opacity="0.25" stroke-width="1"/><line x1="288" y1="218.6" x2="292" y2="218.6" stroke="#a07878" stroke-opacity="0.43" stroke-width="1"/><line x1="288" y1="225.8" x2="292" y2="225.8" stroke="#a07878" stroke-opacity="0.32" stroke-width="1"/><line x1="288" y1="660.7" x2="292" y2="660.7" stroke="#a07878" stroke-opacity="0.33" stroke-width="1"/><line x1="288" y1="472.0" x2="292" y2="472.0" stroke="#a07878" stroke-opacity="0.45" stroke-width="1"/><line x1="288" y1="656.3" x2="292" y2="656.3" stroke="#a07878" stroke-opacity="0.32" stroke-width="1"/><line x1="288" y1="360.2" x2="292" y2="360.2" stroke="#a07878" stroke-opacity="0.49" stroke-width="1"/><line x1="288" y1="238.4" x2="292" y2="238.4" stroke="#a07878" stroke-opacity="0.27" stroke-width="1"/><line x1="288" y1="286.7" x2="292" y2="286.7" stroke="#a07878" stroke-opacity="0.38" stroke-width="1"/><line x1="288" y1="304.0" x2="292" y2="304.0" stroke="#a07878" stroke-opacity="0.33" stroke-width="1"/><line x1="288" y1="366.4" x2="292" y2="366.4" stroke="#a07878" stroke-opacity="0.49" stroke-width="1"/><line x1="288" y1="554.6" x2="292" y2="554.6" stroke="#a07878" stroke-opacity="0.39" stroke-width="1"/><line x1="288" y1="546.3" x2="292" y2="546.3" stroke="#a07878" stroke-opacity="0.47" stroke-width="1"/><line x1="288" y1="607.1" x2="292" y2="607.1" stroke="#a07878" stroke-opacity="0.44" stroke-width="1"/><line x1="496" y1="379.9" x2="500" y2="379.9" stroke="#a07878" stroke-opacity="0.23" stroke-width="1"/><line x1="496" y1="521.7" x2="500" y2="521.7" stroke="#a07878" stroke-opacity="0.22" stroke-width="1"/><line x1="496" y1="272.3" x2="500" y2="272.3" stroke="#a07878" stroke-opacity="0.30" stroke-width="1"/><line x1="496" y1="180.8" x2="500" y2="180.8" stroke="#a07878" stroke-opacity="0.25" stroke-width="1"/><line x1="496" y1="209.5" x2="500" y2="209.5" stroke="#a07878" stroke-opacity="0.21" stroke-width="1"/><line x1="496" y1="662.4" x2="500" y2="662.4" stroke="#a07878" stroke-opacity="0.24" stroke-width="1"/><line x1="496" y1="297.8" x2="500" y2="297.8" stroke="#a07878" stroke-opacity="0.31" stroke-width="1"/><line x1="496" y1="222.0" x2="500" y2="222.0" stroke="#a07878" stroke-opacity="0.50" stroke-width="1"/><line x1="496" y1="423.1" x2="500" y2="423.1" stroke="#a07878" stroke-opacity="0.23" stroke-width="1"/><line x1="496" y1="209.9" x2="500" y2="209.9" stroke="#a07878" stroke-opacity="0.28" stroke-width="1"/><line x1="496" y1="635.7" x2="500" y2="635.7" stroke="#a07878" stroke-opacity="0.21" stroke-width="1"/><line x1="496" y1="707.3" x2="500" y2="707.3" stroke="#a07878" stroke-opacity="0.24" stroke-width="1"/><line x1="496" y1="468.3" x2="500" y2="468.3" stroke="#a07878" stroke-opacity="0.36" stroke-width="1"/><line x1="496" y1="723.4" x2="500" y2="723.4" stroke="#a07878" stroke-opacity="0.41" stroke-width="1"/><line x1="496" y1="303.0" x2="500" y2="303.0" stroke="#a07878" stroke-opacity="0.25" stroke-width="1"/><line x1="496" y1="602.4" x2="500" y2="602.4" stroke="#a07878" stroke-opacity="0.43" stroke-width="1"/><line x1="496" y1="343.2" x2="500" y2="343.2" stroke="#a07878" stroke-opacity="0.44" stroke-width="1"/><line x1="496" y1="727.2" x2="500" y2="727.2" stroke="#a07878" stroke-opacity="0.44" stroke-width="1"/><line x1="496" y1="629.5" x2="500" y2="629.5" stroke="#a07878" stroke-opacity="0.27" stroke-width="1"/><line x1="496" y1="453.3" x2="500" y2="453.3" stroke="#a07878" stroke-opacity="0.21" stroke-width="1"/><line x1="496" y1="166.4" x2="500" y2="166.4" stroke="#a07878" stroke-opacity="0.28" stroke-width="1"/><line x1="496" y1="555.8" x2="500" y2="555.8" stroke="#a07878" stroke-opacity="0.33" stroke-width="1"/><line x1="496" y1="699.1" x2="500" y2="699.1" stroke="#a07878" stroke-opacity="0.49" stroke-width="1"/><line x1="496" y1="363.7" x2="500" y2="363.7" stroke="#a07878" stroke-opacity="0.27" stroke-width="1"/><line x1="496" y1="265.3" x2="500" y2="265.3" stroke="#a07878" stroke-opacity="0.39" stroke-width="1"/><line x1="496" y1="677.6" x2="500" y2="677.6" stroke="#a07878" stroke-opacity="0.34" stroke-width="1"/><line x1="496" y1="532.6" x2="500" y2="532.6" stroke="#a07878" stroke-opacity="0.23" stroke-width="1"/><line x1="496" y1="537.1" x2="500" y2="537.1" stroke="#a07878" stroke-opacity="0.43" stroke-width="1"/><line x1="496" y1="589.6" x2="500" y2="589.6" stroke="#a07878" stroke-opacity="0.25" stroke-width="1"/><line x1="496" y1="612.4" x2="500" y2="612.4" stroke="#a07878" stroke-opacity="0.44" stroke-width="1"/><line x1="496" y1="719.4" x2="500" y2="719.4" stroke="#a07878" stroke-opacity="0.32" stroke-width="1"/><line x1="496" y1="704.8" x2="500" y2="704.8" stroke="#a07878" stroke-opacity="0.25" stroke-width="1"/><line x1="496" y1="224.4" x2="500" y2="224.4" stroke="#a07878" stroke-opacity="0.47" stroke-width="1"/><line x1="496" y1="622.6" x2="500" y2="622.6" stroke="#a07878" stroke-opacity="0.45" stroke-width="1"/><line x1="496" y1="724.5" x2="500" y2="724.5" stroke="#a07878" stroke-opacity="0.31" stroke-width="1"/><line x1="496" y1="471.5" x2="500" y2="471.5" stroke="#a07878" stroke-opacity="0.20" stroke-width="1"/><line x1="496" y1="718.9" x2="500" y2="718.9" stroke="#a07878" stroke-opacity="0.36" stroke-width="1"/><line x1="496" y1="697.1" x2="500" y2="697.1" stroke="#a07878" stroke-opacity="0.46" stroke-width="1"/><line x1="496" y1="634.1" x2="500" y2="634.1" stroke="#a07878" stroke-opacity="0.28" stroke-width="1"/><line x1="496" y1="321.7" x2="500" y2="321.7" stroke="#a07878" stroke-opacity="0.38" stroke-width="1"/><line x1="343.5" y1="146.1" x2="352.7" y2="146.6" stroke="#b89a98" stroke-opacity="0.22" stroke-width="1"/><line x1="381.5" y1="146.9" x2="409.2" y2="146.8" stroke="#b89a98" stroke-opacity="0.33" stroke-width="1"/><line x1="389.8" y1="146.7" x2="408.4" y2="146.1" stroke="#b89a98" stroke-opacity="0.24" stroke-width="1"/><line x1="329.0" y1="144.0" x2="354.2" y2="143.6" stroke="#b89a98" stroke-opacity="0.24" stroke-width="1"/><line x1="432.5" y1="146.8" x2="446.3" y2="146.8" stroke="#b89a98" stroke-opacity="0.26" stroke-width="1"/><line x1="443.8" y1="144.5" x2="463.2" y2="144.2" stroke="#b89a98" stroke-opacity="0.21" stroke-width="1"/><rect x="292.5" y="149.5" width="203" height="128" fill="url(#ig)" stroke="#000" stroke-width="1"/><rect x="292.5" y="283.5" width="203" height="128" fill="url(#ig)" stroke="#000" stroke-width="1"/><rect x="292.5" y="417.5" width="203" height="129" fill="url(#ig)" stroke="#000" stroke-width="1"/><line x1="441.5" y1="280.5" x2="461.0" y2="280.9" stroke="#b89a98" stroke-opacity="0.33" stroke-width="1"/><line x1="378.7" y1="281.1" x2="396.8" y2="281.1" stroke="#b89a98" stroke-opacity="0.29" stroke-width="1"/><line x1="380.4" y1="280.7" x2="397.9" y2="281.2" stroke="#b89a98" stroke-opacity="0.29" stroke-width="1"/><line x1="461.4" y1="282.7" x2="473.6" y2="282.8" stroke="#b89a98" stroke-opacity="0.34" stroke-width="1"/><line x1="454.4" y1="278.7" x2="463.4" y2="278.6" stroke="#b89a98" stroke-opacity="0.16" stroke-width="1"/><line x1="340.0" y1="412.4" x2="362.0" y2="412.7" stroke="#b89a98" stroke-opacity="0.33" stroke-width="1"/><line x1="323.5" y1="415.6" x2="345.3" y2="415.2" stroke="#b89a98" stroke-opacity="0.33" stroke-width="1"/><line x1="478.8" y1="413.1" x2="495.0" y2="413.0" stroke="#b89a98" stroke-opacity="0.25" stroke-width="1"/><line x1="483.1" y1="416.2" x2="492.9" y2="416.1" stroke="#b89a98" stroke-opacity="0.25" stroke-width="1"/><line x1="358.8" y1="413.0" x2="372.4" y2="413.2" stroke="#b89a98" stroke-opacity="0.15" stroke-width="1"/><rect x="293" y="547" width="202" height="194" fill="#f2f1ec"/><line x1="399.3" y1="638.2" x2="405.7" y2="638.0" stroke="#a89090" stroke-opacity="0.24" stroke-width="1"/><line x1="391.3" y1="569.7" x2="421.0" y2="570.0" stroke="#a89090" stroke-opacity="0.30" stroke-width="1"/><line x1="313.9" y1="606.3" x2="320.9" y2="606.7" stroke="#a89090" stroke-opacity="0.19" stroke-width="1"/><line x1="318.6" y1="634.9" x2="346.5" y2="635.2" stroke="#a89090" stroke-opacity="0.19" stroke-width="1"/><line x1="322.4" y1="725.3" x2="342.1" y2="725.5" stroke="#a89090" stroke-opacity="0.16" stroke-width="1"/><line x1="304.9" y1="683.3" x2="321.1" y2="682.7" stroke="#a89090" stroke-opacity="0.29" stroke-width="1"/><line x1="414.5" y1="703.9" x2="422.6" y2="704.3" stroke="#a89090" stroke-opacity="0.16" stroke-width="1"/><line x1="457.9" y1="640.6" x2="472.1" y2="640.7" stroke="#a89090" stroke-opacity="0.29" stroke-width="1"/><line x1="344.9" y1="581.5" x2="363.5" y2="581.2" stroke="#a89090" stroke-opacity="0.17" stroke-width="1"/><line x1="324.7" y1="567.2" x2="335.5" y2="566.9" stroke="#a89090" stroke-opacity="0.20" stroke-width="1"/><line x1="438.3" y1="610.8" x2="456.3" y2="610.4" stroke="#a89090" stroke-opacity="0.20" stroke-width="1"/><line x1="297.5" y1="603.6" x2="303.8" y2="603.9" stroke="#a89090" stroke-opacity="0.23" stroke-width="1"/><line x1="330.0" y1="644.4" x2="358.4" y2="643.9" stroke="#a89090" stroke-opacity="0.27" stroke-width="1"/><line x1="376.1" y1="648.1" x2="402.1" y2="648.0" stroke="#a89090" stroke-opacity="0.23" stroke-width="1"/><line x1="424.7" y1="736.8" x2="438.9" y2="737.2" stroke="#a89090" stroke-opacity="0.26" stroke-width="1"/><line x1="414.8" y1="631.7" x2="429.2" y2="631.1" stroke="#a89090" stroke-opacity="0.17" stroke-width="1"/><line x1="307.4" y1="692.8" x2="319.6" y2="692.4" stroke="#a89090" stroke-opacity="0.16" stroke-width="1"/><line x1="453.8" y1="716.4" x2="475.9" y2="716.2" stroke="#a89090" stroke-opacity="0.19" stroke-width="1"/><line x1="349.7" y1="641.6" x2="359.5" y2="641.6" stroke="#a89090" stroke-opacity="0.19" stroke-width="1"/><line x1="476.7" y1="735.0" x2="494.0" y2="734.7" stroke="#a89090" stroke-opacity="0.29" stroke-width="1"/><line x1="352.8" y1="622.9" x2="358.8" y2="622.8" stroke="#a89090" stroke-opacity="0.22" stroke-width="1"/><line x1="389.5" y1="594.6" x2="407.6" y2="594.0" stroke="#a89090" stroke-opacity="0.19" stroke-width="1"/><line x1="311.1" y1="630.7" x2="318.1" y2="630.1" stroke="#a89090" stroke-opacity="0.20" stroke-width="1"/><line x1="338.2" y1="664.6" x2="356.9" y2="664.9" stroke="#a89090" stroke-opacity="0.25" stroke-width="1"/><line x1="430.0" y1="718.0" x2="445.4" y2="717.8" stroke="#a89090" stroke-opacity="0.30" stroke-width="1"/><line x1="322.4" y1="689.8" x2="343.8" y2="689.2" stroke="#a89090" stroke-opacity="0.28" stroke-width="1"/><line x1="463.5" y1="672.2" x2="487.1" y2="672.5" stroke="#a89090" stroke-opacity="0.17" stroke-width="1"/><line x1="393.5" y1="649.8" x2="419.6" y2="650.2" stroke="#a89090" stroke-opacity="0.27" stroke-width="1"/><line x1="405.0" y1="720.5" x2="427.4" y2="720.7" stroke="#a89090" stroke-opacity="0.18" stroke-width="1"/><line x1="299.9" y1="582.2" x2="314.6" y2="581.7" stroke="#a89090" stroke-opacity="0.28" stroke-width="1"/><line x1="400.1" y1="672.3" x2="421.1" y2="672.5" stroke="#a89090" stroke-opacity="0.22" stroke-width="1"/><line x1="294.6" y1="703.2" x2="318.6" y2="703.2" stroke="#a89090" stroke-opacity="0.23" stroke-width="1"/><line x1="419.3" y1="570.0" x2="442.9" y2="569.7" stroke="#a89090" stroke-opacity="0.16" stroke-width="1"/><line x1="344.5" y1="690.7" x2="355.4" y2="691.0" stroke="#a89090" stroke-opacity="0.30" stroke-width="1"/><line x1="387.9" y1="627.6" x2="405.3" y2="627.8" stroke="#a89090" stroke-opacity="0.27" stroke-width="1"/><line x1="411.2" y1="675.0" x2="419.1" y2="674.6" stroke="#a89090" stroke-opacity="0.19" stroke-width="1"/><line x1="435.2" y1="613.4" x2="454.8" y2="612.8" stroke="#a89090" stroke-opacity="0.16" stroke-width="1"/><line x1="345.1" y1="680.3" x2="367.7" y2="680.5" stroke="#a89090" stroke-opacity="0.19" stroke-width="1"/><line x1="392.1" y1="642.6" x2="409.3" y2="642.1" stroke="#a89090" stroke-opacity="0.28" stroke-width="1"/><line x1="331.9" y1="736.0" x2="360.3" y2="735.4" stroke="#a89090" stroke-opacity="0.22" stroke-width="1"/><line x1="449.8" y1="734.2" x2="466.6" y2="733.9" stroke="#a89090" stroke-opacity="0.18" stroke-width="1"/><line x1="473.7" y1="596.3" x2="493.6" y2="595.9" stroke="#a89090" stroke-opacity="0.23" stroke-width="1"/><line x1="475.0" y1="582.1" x2="494.0" y2="582.1" stroke="#a89090" stroke-opacity="0.28" stroke-width="1"/><line x1="427.6" y1="600.1" x2="455.2" y2="600.1" stroke="#a89090" stroke-opacity="0.15" stroke-width="1"/><line x1="294.7" y1="647.5" x2="311.5" y2="647.3" stroke="#a89090" stroke-opacity="0.17" stroke-width="1"/><line x1="359.4" y1="615.5" x2="385.5" y2="614.9" stroke="#a89090" stroke-opacity="0.26" stroke-width="1"/><line x1="453.4" y1="579.8" x2="481.7" y2="580.1" stroke="#a89090" stroke-opacity="0.29" stroke-width="1"/><line x1="349.1" y1="625.7" x2="364.5" y2="626.3" stroke="#a89090" stroke-opacity="0.24" stroke-width="1"/><line x1="362.5" y1="635.9" x2="375.1" y2="635.4" stroke="#a89090" stroke-opacity="0.17" stroke-width="1"/><line x1="452.6" y1="610.0" x2="481.0" y2="609.7" stroke="#a89090" stroke-opacity="0.19" stroke-width="1"/><line x1="391.1" y1="592.6" x2="406.0" y2="593.1" stroke="#a89090" stroke-opacity="0.28" stroke-width="1"/><line x1="448.3" y1="672.8" x2="476.2" y2="673.4" stroke="#a89090" stroke-opacity="0.23" stroke-width="1"/><line x1="430.7" y1="567.0" x2="454.3" y2="566.9" stroke="#a89090" stroke-opacity="0.26" stroke-width="1"/><line x1="416.5" y1="610.1" x2="423.6" y2="610.6" stroke="#a89090" stroke-opacity="0.17" stroke-width="1"/><line x1="383.7" y1="620.5" x2="396.9" y2="620.8" stroke="#a89090" stroke-opacity="0.30" stroke-width="1"/><line x1="343.4" y1="677.4" x2="356.7" y2="677.5" stroke="#a89090" stroke-opacity="0.21" stroke-width="1"/><line x1="325.8" y1="587.4" x2="336.8" y2="587.9" stroke="#a89090" stroke-opacity="0.22" stroke-width="1"/><line x1="335.8" y1="722.9" x2="365.7" y2="722.9" stroke="#a89090" stroke-opacity="0.17" stroke-width="1"/><line x1="330.6" y1="574.5" x2="344.8" y2="574.0" stroke="#a89090" stroke-opacity="0.19" stroke-width="1"/><line x1="343.1" y1="661.7" x2="370.4" y2="662.0" stroke="#a89090" stroke-opacity="0.21" stroke-width="1"/><line x1="372.6" y1="653.4" x2="387.7" y2="653.2" stroke="#a89090" stroke-opacity="0.16" stroke-width="1"/><line x1="346.7" y1="734.1" x2="355.7" y2="734.1" stroke="#a89090" stroke-opacity="0.24" stroke-width="1"/><line x1="457.9" y1="597.3" x2="470.4" y2="597.0" stroke="#a89090" stroke-opacity="0.21" stroke-width="1"/><line x1="378.7" y1="731.6" x2="405.1" y2="732.1" stroke="#a89090" stroke-opacity="0.15" stroke-width="1"/><line x1="300.1" y1="687.1" x2="327.6" y2="687.1" stroke="#a89090" stroke-opacity="0.24" stroke-width="1"/><line x1="294.0" y1="629.3" x2="322.3" y2="629.6" stroke="#a89090" stroke-opacity="0.28" stroke-width="1"/><line x1="478.7" y1="603.2" x2="487.3" y2="602.8" stroke="#a89090" stroke-opacity="0.23" stroke-width="1"/><line x1="423.6" y1="729.4" x2="446.9" y2="729.5" stroke="#a89090" stroke-opacity="0.26" stroke-width="1"/><line x1="380.9" y1="658.4" x2="387.8" y2="658.7" stroke="#a89090" stroke-opacity="0.18" stroke-width="1"/><line x1="468.8" y1="675.5" x2="482.1" y2="675.0" stroke="#a89090" stroke-opacity="0.19" stroke-width="1"/><line x1="414.9" y1="685.1" x2="423.6" y2="684.6" stroke="#a89090" stroke-opacity="0.23" stroke-width="1"/><line x1="404.7" y1="628.6" x2="416.1" y2="628.8" stroke="#a89090" stroke-opacity="0.15" stroke-width="1"/><line x1="351.3" y1="641.8" x2="380.3" y2="642.0" stroke="#a89090" stroke-opacity="0.28" stroke-width="1"/><line x1="384.3" y1="600.7" x2="396.2" y2="601.3" stroke="#a89090" stroke-opacity="0.26" stroke-width="1"/><line x1="352.4" y1="562.0" x2="370.4" y2="562.2" stroke="#a89090" stroke-opacity="0.21" stroke-width="1"/><line x1="342.9" y1="679.5" x2="371.1" y2="679.1" stroke="#a89090" stroke-opacity="0.16" stroke-width="1"/><line x1="358.2" y1="634.5" x2="380.6" y2="634.2" stroke="#a89090" stroke-opacity="0.27" stroke-width="1"/><line x1="434.4" y1="649.9" x2="445.4" y2="650.5" stroke="#a89090" stroke-opacity="0.20" stroke-width="1"/><line x1="449.8" y1="600.0" x2="461.1" y2="600.3" stroke="#a89090" stroke-opacity="0.19" stroke-width="1"/><line x1="474.9" y1="648.2" x2="485.4" y2="647.9" stroke="#a89090" stroke-opacity="0.21" stroke-width="1"/><line x1="420.4" y1="730.7" x2="429.9" y2="730.5" stroke="#a89090" stroke-opacity="0.18" stroke-width="1"/><line x1="479.1" y1="583.8" x2="486.3" y2="583.3" stroke="#a89090" stroke-opacity="0.21" stroke-width="1"/><line x1="464.7" y1="718.8" x2="488.2" y2="719.4" stroke="#a89090" stroke-opacity="0.29" stroke-width="1"/><line x1="356.6" y1="591.8" x2="385.0" y2="592.1" stroke="#a89090" stroke-opacity="0.15" stroke-width="1"/><line x1="420.2" y1="626.9" x2="435.2" y2="626.7" stroke="#a89090" stroke-opacity="0.18" stroke-width="1"/><line x1="294.5" y1="608.9" x2="309.0" y2="609.5" stroke="#a89090" stroke-opacity="0.17" stroke-width="1"/><line x1="477.2" y1="595.7" x2="491.8" y2="596.1" stroke="#a89090" stroke-opacity="0.27" stroke-width="1"/><line x1="376.2" y1="567.0" x2="393.5" y2="566.8" stroke="#a89090" stroke-opacity="0.29" stroke-width="1"/><line x1="330.7" y1="624.3" x2="358.2" y2="623.7" stroke="#a89090" stroke-opacity="0.21" stroke-width="1"/><line x1="448.2" y1="697.5" x2="455.2" y2="697.0" stroke="#a89090" stroke-opacity="0.16" stroke-width="1"/><line x1="468.8" y1="604.8" x2="492.7" y2="605.3" stroke="#a89090" stroke-opacity="0.20" stroke-width="1"/><line x1="345.7" y1="732.3" x2="366.5" y2="732.0" stroke="#a89090" stroke-opacity="0.26" stroke-width="1"/><line x1="354.1" y1="608.2" x2="360.2" y2="608.5" stroke="#a89090" stroke-opacity="0.29" stroke-width="1"/><line x1="414.5" y1="729.7" x2="421.0" y2="729.4" stroke="#a89090" stroke-opacity="0.22" stroke-width="1"/><line x1="475.8" y1="731.6" x2="491.1" y2="731.3" stroke="#a89090" stroke-opacity="0.21" stroke-width="1"/><line x1="387.8" y1="726.9" x2="398.2" y2="727.3" stroke="#a89090" stroke-opacity="0.26" stroke-width="1"/><line x1="450.3" y1="698.7" x2="470.9" y2="698.4" stroke="#a89090" stroke-opacity="0.20" stroke-width="1"/><line x1="362.8" y1="700.4" x2="370.6" y2="700.0" stroke="#a89090" stroke-opacity="0.26" stroke-width="1"/><line x1="341.0" y1="569.8" x2="347.8" y2="569.8" stroke="#a89090" stroke-opacity="0.20" stroke-width="1"/><line x1="480.2" y1="718.8" x2="494.0" y2="718.5" stroke="#a89090" stroke-opacity="0.16" stroke-width="1"/><line x1="312.3" y1="648.7" x2="335.4" y2="648.7" stroke="#a89090" stroke-opacity="0.19" stroke-width="1"/><line x1="373.2" y1="670.9" x2="395.4" y2="671.2" stroke="#a89090" stroke-opacity="0.28" stroke-width="1"/><line x1="420.2" y1="580.1" x2="446.4" y2="579.8" stroke="#a89090" stroke-opacity="0.24" stroke-width="1"/><line x1="364.9" y1="692.3" x2="375.6" y2="692.0" stroke="#a89090" stroke-opacity="0.19" stroke-width="1"/><line x1="323.1" y1="718.9" x2="343.0" y2="718.7" stroke="#a89090" stroke-opacity="0.21" stroke-width="1"/><line x1="482.6" y1="650.3" x2="494.0" y2="650.7" stroke="#a89090" stroke-opacity="0.25" stroke-width="1"/><line x1="482.3" y1="576.6" x2="494.0" y2="577.0" stroke="#a89090" stroke-opacity="0.28" stroke-width="1"/><line x1="467.7" y1="565.3" x2="480.8" y2="564.9" stroke="#a89090" stroke-opacity="0.18" stroke-width="1"/><line x1="478.9" y1="664.1" x2="494.0" y2="664.0" stroke="#a89090" stroke-opacity="0.28" stroke-width="1"/><line x1="379.3" y1="605.3" x2="404.0" y2="605.8" stroke="#a89090" stroke-opacity="0.17" stroke-width="1"/><line x1="407.3" y1="670.8" x2="418.5" y2="670.7" stroke="#a89090" stroke-opacity="0.17" stroke-width="1"/><line x1="332.8" y1="604.4" x2="353.1" y2="604.6" stroke="#a89090" stroke-opacity="0.18" stroke-width="1"/><line x1="296.2" y1="617.6" x2="318.4" y2="617.2" stroke="#a89090" stroke-opacity="0.20" stroke-width="1"/><line x1="332.6" y1="702.7" x2="351.8" y2="702.2" stroke="#a89090" stroke-opacity="0.17" stroke-width="1"/><line x1="369.1" y1="658.1" x2="390.4" y2="657.6" stroke="#a89090" stroke-opacity="0.17" stroke-width="1"/><line x1="426.1" y1="632.6" x2="438.9" y2="632.4" stroke="#a89090" stroke-opacity="0.29" stroke-width="1"/><line x1="353.3" y1="661.1" x2="367.9" y2="661.0" stroke="#a89090" stroke-opacity="0.28" stroke-width="1"/><line x1="483.4" y1="624.2" x2="494.0" y2="624.5" stroke="#a89090" stroke-opacity="0.18" stroke-width="1"/><line x1="295.1" y1="722.1" x2="311.3" y2="722.5" stroke="#a89090" stroke-opacity="0.21" stroke-width="1"/><line x1="461.7" y1="641.9" x2="471.6" y2="641.3" stroke="#a89090" stroke-opacity="0.23" stroke-width="1"/><line x1="415.7" y1="723.6" x2="423.9" y2="723.7" stroke="#a89090" stroke-opacity="0.21" stroke-width="1"/><line x1="389.8" y1="584.6" x2="402.6" y2="584.6" stroke="#a89090" stroke-opacity="0.29" stroke-width="1"/><line x1="314.7" y1="647.3" x2="340.0" y2="647.8" stroke="#a89090" stroke-opacity="0.18" stroke-width="1"/><line x1="318.1" y1="729.6" x2="347.5" y2="729.6" stroke="#a89090" stroke-opacity="0.16" stroke-width="1"/><line x1="470.0" y1="628.6" x2="494.0" y2="628.7" stroke="#a89090" stroke-opacity="0.27" stroke-width="1"/><line x1="324.5" y1="701.0" x2="335.8" y2="700.9" stroke="#a89090" stroke-opacity="0.28" stroke-width="1"/><line x1="451.5" y1="591.3" x2="462.8" y2="591.2" stroke="#a89090" stroke-opacity="0.23" stroke-width="1"/><line x1="366.9" y1="580.4" x2="378.8" y2="580.7" stroke="#a89090" stroke-opacity="0.28" stroke-width="1"/><line x1="301.8" y1="660.3" x2="326.0" y2="659.8" stroke="#a89090" stroke-opacity="0.28" stroke-width="1"/><line x1="316.4" y1="667.1" x2="335.6" y2="667.3" stroke="#a89090" stroke-opacity="0.20" stroke-width="1"/><line x1="373.8" y1="664.0" x2="390.0" y2="664.2" stroke="#a89090" stroke-opacity="0.22" stroke-width="1"/><line x1="377.3" y1="562.3" x2="398.1" y2="562.2" stroke="#a89090" stroke-opacity="0.19" stroke-width="1"/><line x1="439.1" y1="700.0" x2="456.1" y2="699.6" stroke="#a89090" stroke-opacity="0.22" stroke-width="1"/><line x1="314.3" y1="581.4" x2="330.7" y2="580.9" stroke="#a89090" stroke-opacity="0.22" stroke-width="1"/><line x1="390.9" y1="565.4" x2="412.2" y2="564.9" stroke="#a89090" stroke-opacity="0.26" stroke-width="1"/><line x1="441.8" y1="651.1" x2="449.1" y2="651.1" stroke="#a89090" stroke-opacity="0.21" stroke-width="1"/><line x1="474.7" y1="582.8" x2="494.0" y2="583.4" stroke="#a89090" stroke-opacity="0.26" stroke-width="1"/><line x1="448.8" y1="593.3" x2="478.4" y2="593.2" stroke="#a89090" stroke-opacity="0.29" stroke-width="1"/><line x1="468.0" y1="588.1" x2="493.0" y2="588.6" stroke="#a89090" stroke-opacity="0.16" stroke-width="1"/><line x1="360.7" y1="695.6" x2="370.5" y2="696.1" stroke="#a89090" stroke-opacity="0.19" stroke-width="1"/><line x1="449.0" y1="584.1" x2="467.0" y2="584.6" stroke="#a89090" stroke-opacity="0.18" stroke-width="1"/><line x1="343.9" y1="650.1" x2="357.6" y2="649.5" stroke="#a89090" stroke-opacity="0.18" stroke-width="1"/><line x1="324.6" y1="728.4" x2="346.9" y2="728.9" stroke="#a89090" stroke-opacity="0.18" stroke-width="1"/><line x1="443.1" y1="578.9" x2="461.9" y2="579.1" stroke="#a89090" stroke-opacity="0.20" stroke-width="1"/><line x1="459.9" y1="659.0" x2="479.8" y2="659.5" stroke="#a89090" stroke-opacity="0.17" stroke-width="1"/><line x1="482.7" y1="672.6" x2="494.0" y2="673.0" stroke="#a89090" stroke-opacity="0.19" stroke-width="1"/><line x1="482.2" y1="663.1" x2="494.0" y2="663.4" stroke="#a89090" stroke-opacity="0.22" stroke-width="1"/><line x1="327.6" y1="693.3" x2="334.7" y2="693.7" stroke="#a89090" stroke-opacity="0.19" stroke-width="1"/><line x1="415.5" y1="737.1" x2="435.5" y2="737.3" stroke="#a89090" stroke-opacity="0.20" stroke-width="1"/><line x1="294.3" y1="564.2" x2="303.9" y2="564.3" stroke="#a89090" stroke-opacity="0.21" stroke-width="1"/><line x1="391.4" y1="721.0" x2="400.6" y2="720.7" stroke="#a89090" stroke-opacity="0.25" stroke-width="1"/><line x1="298.2" y1="558.5" x2="312.8" y2="558.0" stroke="#a89090" stroke-opacity="0.20" stroke-width="1"/><line x1="336.6" y1="664.2" x2="356.7" y2="663.9" stroke="#a89090" stroke-opacity="0.24" stroke-width="1"/><line x1="384.2" y1="582.5" x2="412.7" y2="582.2" stroke="#a89090" stroke-opacity="0.17" stroke-width="1"/><line x1="312.2" y1="674.2" x2="339.1" y2="674.5" stroke="#a89090" stroke-opacity="0.21" stroke-width="1"/><line x1="344.2" y1="560.1" x2="365.7" y2="560.2" stroke="#a89090" stroke-opacity="0.20" stroke-width="1"/><line x1="416.7" y1="638.8" x2="445.2" y2="639.0" stroke="#a89090" stroke-opacity="0.19" stroke-width="1"/><line x1="465.7" y1="566.0" x2="484.4" y2="565.9" stroke="#a89090" stroke-opacity="0.19" stroke-width="1"/><line x1="305.1" y1="699.8" x2="311.4" y2="699.8" stroke="#a89090" stroke-opacity="0.29" stroke-width="1"/><line x1="321.0" y1="594.3" x2="341.6" y2="594.3" stroke="#a89090" stroke-opacity="0.25" stroke-width="1"/><line x1="448.5" y1="589.8" x2="462.0" y2="589.5" stroke="#a89090" stroke-opacity="0.16" stroke-width="1"/><line x1="463.0" y1="700.5" x2="486.1" y2="699.9" stroke="#a89090" stroke-opacity="0.28" stroke-width="1"/><line x1="435.6" y1="642.7" x2="459.4" y2="642.6" stroke="#a89090" stroke-opacity="0.18" stroke-width="1"/><line x1="314.0" y1="600.3" x2="320.9" y2="600.1" stroke="#a89090" stroke-opacity="0.26" stroke-width="1"/><line x1="426.1" y1="711.9" x2="449.2" y2="711.6" stroke="#a89090" stroke-opacity="0.23" stroke-width="1"/><line x1="376.9" y1="701.5" x2="395.4" y2="701.2" stroke="#a89090" stroke-opacity="0.25" stroke-width="1"/><line x1="477.4" y1="597.5" x2="494.0" y2="596.9" stroke="#a89090" stroke-opacity="0.19" stroke-width="1"/><line x1="338.9" y1="693.4" x2="367.5" y2="693.7" stroke="#a89090" stroke-opacity="0.20" stroke-width="1"/><line x1="461.2" y1="617.8" x2="473.0" y2="618.3" stroke="#a89090" stroke-opacity="0.24" stroke-width="1"/><line x1="425.6" y1="679.1" x2="455.1" y2="679.0" stroke="#a89090" stroke-opacity="0.28" stroke-width="1"/><line x1="426.5" y1="714.1" x2="443.0" y2="714.3" stroke="#a89090" stroke-opacity="0.24" stroke-width="1"/><line x1="352.5" y1="596.6" x2="373.4" y2="596.1" stroke="#a89090" stroke-opacity="0.29" stroke-width="1"/><line x1="321.5" y1="562.9" x2="330.0" y2="563.4" stroke="#a89090" stroke-opacity="0.20" stroke-width="1"/><line x1="320.9" y1="563.2" x2="327.9" y2="563.5" stroke="#a89090" stroke-opacity="0.25" stroke-width="1"/><line x1="426.4" y1="692.1" x2="434.0" y2="692.2" stroke="#a89090" stroke-opacity="0.20" stroke-width="1"/><line x1="449.3" y1="707.2" x2="476.7" y2="706.6" stroke="#a89090" stroke-opacity="0.28" stroke-width="1"/><line x1="467.7" y1="729.9" x2="476.3" y2="729.5" stroke="#a89090" stroke-opacity="0.17" stroke-width="1"/><line x1="300.5" y1="712.3" x2="326.0" y2="712.4" stroke="#a89090" stroke-opacity="0.27" stroke-width="1"/><line x1="414.0" y1="610.3" x2="422.4" y2="609.8" stroke="#a89090" stroke-opacity="0.26" stroke-width="1"/><line x1="332.9" y1="616.1" x2="349.1" y2="615.5" stroke="#a89090" stroke-opacity="0.19" stroke-width="1"/><line x1="347.7" y1="688.3" x2="362.5" y2="688.1" stroke="#a89090" stroke-opacity="0.29" stroke-width="1"/><line x1="389.7" y1="713.0" x2="410.5" y2="712.4" stroke="#a89090" stroke-opacity="0.21" stroke-width="1"/><line x1="376.9" y1="698.7" x2="391.2" y2="698.9" stroke="#a89090" stroke-opacity="0.23" stroke-width="1"/><line x1="335.1" y1="714.9" x2="343.3" y2="715.3" stroke="#a89090" stroke-opacity="0.18" stroke-width="1"/><line x1="294.2" y1="594.8" x2="318.5" y2="595.3" stroke="#a89090" stroke-opacity="0.15" stroke-width="1"/><line x1="387.3" y1="647.5" x2="412.4" y2="647.1" stroke="#a89090" stroke-opacity="0.22" stroke-width="1"/><line x1="360.0" y1="709.4" x2="372.2" y2="709.9" stroke="#a89090" stroke-opacity="0.19" stroke-width="1"/><line x1="334.8" y1="685.3" x2="352.8" y2="684.8" stroke="#a89090" stroke-opacity="0.25" stroke-width="1"/><line x1="309.4" y1="701.4" x2="332.1" y2="701.7" stroke="#a89090" stroke-opacity="0.24" stroke-width="1"/><line x1="361.6" y1="631.0" x2="377.0" y2="631.5" stroke="#a89090" stroke-opacity="0.16" stroke-width="1"/><line x1="462.8" y1="562.6" x2="473.8" y2="562.3" stroke="#a89090" stroke-opacity="0.29" stroke-width="1"/><line x1="389.2" y1="627.0" x2="416.4" y2="626.7" stroke="#a89090" stroke-opacity="0.22" stroke-width="1"/><line x1="395.0" y1="695.3" x2="419.1" y2="695.5" stroke="#a89090" stroke-opacity="0.20" stroke-width="1"/><line x1="356.1" y1="586.3" x2="382.3" y2="586.5" stroke="#a89090" stroke-opacity="0.26" stroke-width="1"/><line x1="326.2" y1="637.9" x2="350.8" y2="638.0" stroke="#a89090" stroke-opacity="0.17" stroke-width="1"/><line x1="381.8" y1="719.1" x2="393.5" y2="718.7" stroke="#a89090" stroke-opacity="0.20" stroke-width="1"/><line x1="427.6" y1="711.5" x2="437.3" y2="711.1" stroke="#a89090" stroke-opacity="0.19" stroke-width="1"/><line x1="356.0" y1="653.0" x2="365.9" y2="652.8" stroke="#a89090" stroke-opacity="0.18" stroke-width="1"/><line x1="479.3" y1="690.6" x2="487.7" y2="691.2" stroke="#a89090" stroke-opacity="0.17" stroke-width="1"/><line x1="367.0" y1="737.1" x2="392.1" y2="737.3" stroke="#a89090" stroke-opacity="0.22" stroke-width="1"/><line x1="331.3" y1="674.1" x2="339.8" y2="673.8" stroke="#a89090" stroke-opacity="0.21" stroke-width="1"/><line x1="300.4" y1="630.6" x2="325.4" y2="630.9" stroke="#a89090" stroke-opacity="0.23" stroke-width="1"/><line x1="414.2" y1="642.3" x2="423.6" y2="642.4" stroke="#a89090" stroke-opacity="0.21" stroke-width="1"/><line x1="434.8" y1="723.3" x2="451.1" y2="723.3" stroke="#a89090" stroke-opacity="0.26" stroke-width="1"/><line x1="374.0" y1="599.6" x2="397.4" y2="600.1" stroke="#a89090" stroke-opacity="0.27" stroke-width="1"/><line x1="427.0" y1="713.1" x2="449.3" y2="713.3" stroke="#a89090" stroke-opacity="0.22" stroke-width="1"/><line x1="353.5" y1="672.3" x2="361.8" y2="672.2" stroke="#a89090" stroke-opacity="0.27" stroke-width="1"/><line x1="429.5" y1="672.6" x2="441.5" y2="672.5" stroke="#a89090" stroke-opacity="0.22" stroke-width="1"/><line x1="412.1" y1="632.5" x2="434.3" y2="633.0" stroke="#a89090" stroke-opacity="0.18" stroke-width="1"/><line x1="418.4" y1="699.6" x2="433.7" y2="699.6" stroke="#a89090" stroke-opacity="0.30" stroke-width="1"/><line x1="301.2" y1="656.9" x2="311.1" y2="657.2" stroke="#a89090" stroke-opacity="0.29" stroke-width="1"/><line x1="392.7" y1="576.4" x2="412.4" y2="576.4" stroke="#a89090" stroke-opacity="0.26" stroke-width="1"/><line x1="391.3" y1="674.3" x2="417.2" y2="674.4" stroke="#a89090" stroke-opacity="0.21" stroke-width="1"/><line x1="474.1" y1="596.2" x2="494.0" y2="596.1" stroke="#a89090" stroke-opacity="0.26" stroke-width="1"/><line x1="317.3" y1="737.2" x2="331.8" y2="736.6" stroke="#a89090" stroke-opacity="0.19" stroke-width="1"/><line x1="369.9" y1="560.4" x2="386.0" y2="560.3" stroke="#a89090" stroke-opacity="0.25" stroke-width="1"/><line x1="360.9" y1="606.3" x2="372.3" y2="606.5" stroke="#a89090" stroke-opacity="0.29" stroke-width="1"/><line x1="394.1" y1="597.8" x2="419.4" y2="597.7" stroke="#a89090" stroke-opacity="0.18" stroke-width="1"/><line x1="318.6" y1="699.3" x2="344.0" y2="699.5" stroke="#a89090" stroke-opacity="0.22" stroke-width="1"/><line x1="400.8" y1="599.1" x2="429.9" y2="599.0" stroke="#a89090" stroke-opacity="0.25" stroke-width="1"/><line x1="449.6" y1="706.5" x2="466.8" y2="706.3" stroke="#a89090" stroke-opacity="0.23" stroke-width="1"/><line x1="317.8" y1="709.7" x2="332.3" y2="710.2" stroke="#a89090" stroke-opacity="0.19" stroke-width="1"/><line x1="365.5" y1="604.1" x2="381.7" y2="603.8" stroke="#a89090" stroke-opacity="0.15" stroke-width="1"/><line x1="431.1" y1="609.2" x2="443.0" y2="608.9" stroke="#a89090" stroke-opacity="0.22" stroke-width="1"/><line x1="375.4" y1="674.0" x2="397.2" y2="673.8" stroke="#a89090" stroke-opacity="0.29" stroke-width="1"/><line x1="456.3" y1="568.4" x2="482.2" y2="568.9" stroke="#a89090" stroke-opacity="0.27" stroke-width="1"/><line x1="320.7" y1="709.3" x2="341.9" y2="708.7" stroke="#a89090" stroke-opacity="0.15" stroke-width="1"/><line x1="474.8" y1="677.4" x2="486.8" y2="676.9" stroke="#a89090" stroke-opacity="0.17" stroke-width="1"/><line x1="338.4" y1="699.3" x2="352.7" y2="698.9" stroke="#a89090" stroke-opacity="0.29" stroke-width="1"/><line x1="444.4" y1="588.6" x2="471.8" y2="588.7" stroke="#a89090" stroke-opacity="0.27" stroke-width="1"/><line x1="421.0" y1="720.7" x2="445.9" y2="721.1" stroke="#a89090" stroke-opacity="0.18" stroke-width="1"/><line x1="425.6" y1="654.6" x2="449.4" y2="654.5" stroke="#a89090" stroke-opacity="0.28" stroke-width="1"/><line x1="399.5" y1="606.1" x2="411.1" y2="605.7" stroke="#a89090" stroke-opacity="0.22" stroke-width="1"/><line x1="305.1" y1="643.0" x2="314.6" y2="643.0" stroke="#a89090" stroke-opacity="0.22" stroke-width="1"/><line x1="396.5" y1="715.0" x2="402.7" y2="715.5" stroke="#a89090" stroke-opacity="0.22" stroke-width="1"/><line x1="400.9" y1="679.1" x2="427.1" y2="678.9" stroke="#a89090" stroke-opacity="0.21" stroke-width="1"/><line x1="476.5" y1="571.7" x2="494.0" y2="571.9" stroke="#a89090" stroke-opacity="0.15" stroke-width="1"/><line x1="409.8" y1="682.2" x2="438.2" y2="682.0" stroke="#a89090" stroke-opacity="0.30" stroke-width="1"/><line x1="391.0" y1="646.2" x2="418.6" y2="645.7" stroke="#a89090" stroke-opacity="0.26" stroke-width="1"/><line x1="412.8" y1="619.6" x2="439.5" y2="619.5" stroke="#a89090" stroke-opacity="0.22" stroke-width="1"/><rect x="293" y="547" width="202" height="11" fill="#808080"/><line x1="293" y1="546.5" x2="495" y2="546.5" stroke="#000" stroke-width="1"/><rect x="293" y="612" width="202" height="10" fill="#808080"/><line x1="293" y1="611.5" x2="495" y2="611.5" stroke="#000" stroke-width="1"/><rect x="293" y="676" width="202" height="10" fill="#808080"/><line x1="293" y1="675.5" x2="495" y2="675.5" stroke="#000" stroke-width="1"/><line x1="293" y1="552.5" x2="495" y2="552.5" stroke="#7878e8" stroke-width="1" stroke-dasharray="5,5"/><path d="M299.5 559 V604.5 H487.5 V559" stroke="#000" stroke-width="1" fill="none"/><path d="M299.5 623 V669.5 H487.5 V623" stroke="#000" stroke-width="1" fill="none"/><path d="M299.5 687 V732.5 H487.5 V687" stroke="#000" stroke-width="1" fill="none"/><line x1="300" y1="734.5" x2="495" y2="734.5" stroke="#7878e8" stroke-width="1" stroke-dasharray="5,5"/><rect x="293" y="738" width="202" height="4" fill="#000"/><path d="M292.5 546 V742 M495.5 546 V742" stroke="#000" stroke-width="1.2"/><line x1="287" y1="746.5" x2="501" y2="746.5" stroke="#000" stroke-width="1"/><rect x="292.5" y="746.5" width="210" height="28" fill="#ecebe2" stroke="#000" stroke-width="1"/><line x1="397.0" y1="767.3" x2="408.1" y2="767.2" stroke="#a08888" stroke-opacity="0.23" stroke-width="1"/><line x1="402.6" y1="768.7" x2="415.6" y2="769.1" stroke="#a08888" stroke-opacity="0.23" stroke-width="1"/><line x1="392.7" y1="754.8" x2="410.9" y2="755.4" stroke="#a08888" stroke-opacity="0.28" stroke-width="1"/><line x1="449.2" y1="756.3" x2="462.8" y2="756.0" stroke="#a08888" stroke-opacity="0.27" stroke-width="1"/><line x1="418.4" y1="767.6" x2="425.4" y2="767.9" stroke="#a08888" stroke-opacity="0.33" stroke-width="1"/><line x1="400.9" y1="749.2" x2="414.1" y2="748.6" stroke="#a08888" stroke-opacity="0.19" stroke-width="1"/><line x1="474.6" y1="763.2" x2="496.4" y2="763.6" stroke="#a08888" stroke-opacity="0.33" stroke-width="1"/><line x1="413.9" y1="763.4" x2="434.9" y2="763.7" stroke="#a08888" stroke-opacity="0.27" stroke-width="1"/><line x1="427.5" y1="753.3" x2="449.5" y2="753.3" stroke="#a08888" stroke-opacity="0.30" stroke-width="1"/><line x1="313.9" y1="752.5" x2="320.8" y2="752.9" stroke="#a08888" stroke-opacity="0.33" stroke-width="1"/><line x1="422.5" y1="757.2" x2="448.3" y2="757.6" stroke="#a08888" stroke-opacity="0.26" stroke-width="1"/><line x1="344.6" y1="755.6" x2="360.7" y2="755.3" stroke="#a08888" stroke-opacity="0.24" stroke-width="1"/><line x1="419.8" y1="771.3" x2="427.1" y2="771.4" stroke="#a08888" stroke-opacity="0.16" stroke-width="1"/><line x1="317.3" y1="768.3" x2="337.1" y2="768.8" stroke="#a08888" stroke-opacity="0.24" stroke-width="1"/><line x1="296.8" y1="757.7" x2="317.0" y2="758.2" stroke="#a08888" stroke-opacity="0.35" stroke-width="1"/><line x1="387.2" y1="758.3" x2="395.6" y2="758.5" stroke="#a08888" stroke-opacity="0.19" stroke-width="1"/><line x1="323.7" y1="748.4" x2="329.9" y2="748.6" stroke="#a08888" stroke-opacity="0.17" stroke-width="1"/><line x1="483.4" y1="750.2" x2="500.0" y2="749.8" stroke="#a08888" stroke-opacity="0.15" stroke-width="1"/><line x1="435.0" y1="754.1" x2="458.6" y2="753.7" stroke="#a08888" stroke-opacity="0.16" stroke-width="1"/><line x1="445.7" y1="765.8" x2="472.2" y2="766.1" stroke="#a08888" stroke-opacity="0.17" stroke-width="1"/><line x1="417.2" y1="765.7" x2="434.3" y2="766.2" stroke="#a08888" stroke-opacity="0.20" stroke-width="1"/><line x1="483.0" y1="765.9" x2="489.3" y2="765.3" stroke="#a08888" stroke-opacity="0.28" stroke-width="1"/><line x1="454.2" y1="750.0" x2="467.7" y2="750.3" stroke="#a08888" stroke-opacity="0.18" stroke-width="1"/><line x1="462.7" y1="760.2" x2="470.2" y2="760.0" stroke="#a08888" stroke-opacity="0.26" stroke-width="1"/><line x1="380.0" y1="764.9" x2="389.5" y2="765.3" stroke="#a08888" stroke-opacity="0.22" stroke-width="1"/><line x1="420.4" y1="763.7" x2="436.4" y2="763.6" stroke="#a08888" stroke-opacity="0.31" stroke-width="1"/><line x1="479.2" y1="767.6" x2="498.8" y2="767.4" stroke="#a08888" stroke-opacity="0.16" stroke-width="1"/><line x1="484.9" y1="765.6" x2="500.0" y2="765.4" stroke="#a08888" stroke-opacity="0.27" stroke-width="1"/><line x1="485.6" y1="768.8" x2="500.0" y2="768.6" stroke="#a08888" stroke-opacity="0.24" stroke-width="1"/><line x1="468.1" y1="757.4" x2="490.5" y2="757.5" stroke="#a08888" stroke-opacity="0.33" stroke-width="1"/><line x1="452.3" y1="755.1" x2="458.3" y2="754.8" stroke="#a08888" stroke-opacity="0.23" stroke-width="1"/><line x1="409.0" y1="768.4" x2="436.3" y2="767.9" stroke="#a08888" stroke-opacity="0.32" stroke-width="1"/><line x1="453.1" y1="769.7" x2="472.8" y2="769.4" stroke="#a08888" stroke-opacity="0.32" stroke-width="1"/><line x1="452.2" y1="765.1" x2="480.1" y2="764.9" stroke="#a08888" stroke-opacity="0.17" stroke-width="1"/><line x1="402.5" y1="767.9" x2="413.3" y2="768.2" stroke="#a08888" stroke-opacity="0.34" stroke-width="1"/><line x1="339.9" y1="763.2" x2="362.1" y2="763.1" stroke="#a08888" stroke-opacity="0.19" stroke-width="1"/><line x1="343.9" y1="766.8" x2="368.9" y2="766.7" stroke="#a08888" stroke-opacity="0.17" stroke-width="1"/><line x1="452.1" y1="767.3" x2="463.7" y2="767.4" stroke="#a08888" stroke-opacity="0.33" stroke-width="1"/><line x1="467.5" y1="761.0" x2="484.9" y2="761.2" stroke="#a08888" stroke-opacity="0.19" stroke-width="1"/><line x1="331.7" y1="752.5" x2="354.5" y2="752.4" stroke="#a08888" stroke-opacity="0.26" stroke-width="1"/><line x1="372.9" y1="760.9" x2="382.5" y2="760.4" stroke="#a08888" stroke-opacity="0.35" stroke-width="1"/><line x1="367.3" y1="750.7" x2="388.5" y2="751.0" stroke="#a08888" stroke-opacity="0.18" stroke-width="1"/><line x1="411.1" y1="756.6" x2="429.5" y2="756.0" stroke="#a08888" stroke-opacity="0.16" stroke-width="1"/><line x1="488.1" y1="769.7" x2="500.0" y2="769.7" stroke="#a08888" stroke-opacity="0.20" stroke-width="1"/><line x1="446.7" y1="758.6" x2="475.4" y2="759.0" stroke="#a08888" stroke-opacity="0.31" stroke-width="1"/><line x1="482.8" y1="754.3" x2="489.7" y2="754.0" stroke="#a08888" stroke-opacity="0.19" stroke-width="1"/><line x1="310.4" y1="749.3" x2="329.8" y2="749.7" stroke="#a08888" stroke-opacity="0.24" stroke-width="1"/><line x1="479.7" y1="770.7" x2="487.2" y2="770.9" stroke="#a08888" stroke-opacity="0.23" stroke-width="1"/><line x1="317.5" y1="772.0" x2="329.7" y2="772.1" stroke="#a08888" stroke-opacity="0.28" stroke-width="1"/><line x1="481.5" y1="764.7" x2="496.9" y2="764.7" stroke="#a08888" stroke-opacity="0.18" stroke-width="1"/><line x1="483.3" y1="772.8" x2="494.6" y2="772.2" stroke="#a08888" stroke-opacity="0.20" stroke-width="1"/><line x1="363.0" y1="770.6" x2="390.7" y2="771.0" stroke="#a08888" stroke-opacity="0.16" stroke-width="1"/><line x1="448.1" y1="765.7" x2="469.6" y2="766.3" stroke="#a08888" stroke-opacity="0.16" stroke-width="1"/><line x1="322.4" y1="766.9" x2="350.9" y2="767.1" stroke="#a08888" stroke-opacity="0.21" stroke-width="1"/><line x1="409.9" y1="766.9" x2="418.5" y2="766.7" stroke="#a08888" stroke-opacity="0.20" stroke-width="1"/><line x1="318.3" y1="760.0" x2="328.4" y2="759.7" stroke="#a08888" stroke-opacity="0.18" stroke-width="1"/><line x1="426.8" y1="748.3" x2="450.0" y2="747.9" stroke="#a08888" stroke-opacity="0.16" stroke-width="1"/><line x1="475.8" y1="753.5" x2="500.0" y2="754.0" stroke="#a08888" stroke-opacity="0.33" stroke-width="1"/><line x1="321.4" y1="759.2" x2="329.7" y2="759.7" stroke="#a08888" stroke-opacity="0.32" stroke-width="1"/><line x1="417.2" y1="759.3" x2="431.3" y2="759.7" stroke="#a08888" stroke-opacity="0.25" stroke-width="1"/><line x1="417.1" y1="751.6" x2="428.4" y2="751.0" stroke="#a08888" stroke-opacity="0.29" stroke-width="1"/><line x1="402.5" y1="751.6" x2="429.4" y2="751.3" stroke="#a08888" stroke-opacity="0.23" stroke-width="1"/><line x1="324.5" y1="754.8" x2="350.7" y2="754.6" stroke="#a08888" stroke-opacity="0.18" stroke-width="1"/><line x1="390.2" y1="756.0" x2="417.9" y2="755.5" stroke="#a08888" stroke-opacity="0.35" stroke-width="1"/><line x1="305.1" y1="770.4" x2="327.2" y2="770.0" stroke="#a08888" stroke-opacity="0.25" stroke-width="1"/><line x1="350.1" y1="754.4" x2="360.9" y2="754.3" stroke="#a08888" stroke-opacity="0.35" stroke-width="1"/><line x1="489.6" y1="771.1" x2="498.0" y2="770.9" stroke="#a08888" stroke-opacity="0.33" stroke-width="1"/><line x1="305.3" y1="766.2" x2="318.3" y2="766.7" stroke="#a08888" stroke-opacity="0.15" stroke-width="1"/><line x1="452.2" y1="756.5" x2="461.5" y2="755.9" stroke="#a08888" stroke-opacity="0.32" stroke-width="1"/><line x1="397.2" y1="752.6" x2="413.7" y2="753.1" stroke="#a08888" stroke-opacity="0.19" stroke-width="1"/><line x1="406.0" y1="751.5" x2="416.3" y2="751.8" stroke="#a08888" stroke-opacity="0.29" stroke-width="1"/><line x1="332.6" y1="750.0" x2="340.7" y2="750.1" stroke="#a08888" stroke-opacity="0.25" stroke-width="1"/><line x1="347.7" y1="753.2" x2="368.4" y2="753.4" stroke="#a08888" stroke-opacity="0.31" stroke-width="1"/><line x1="408.3" y1="753.1" x2="415.8" y2="753.3" stroke="#a08888" stroke-opacity="0.23" stroke-width="1"/><line x1="435.4" y1="749.4" x2="460.9" y2="749.2" stroke="#a08888" stroke-opacity="0.32" stroke-width="1"/><line x1="463.4" y1="760.3" x2="469.8" y2="760.8" stroke="#a08888" stroke-opacity="0.25" stroke-width="1"/><line x1="464.9" y1="754.7" x2="475.4" y2="755.1" stroke="#a08888" stroke-opacity="0.22" stroke-width="1"/><line x1="326.0" y1="757.3" x2="346.3" y2="756.7" stroke="#a08888" stroke-opacity="0.25" stroke-width="1"/><line x1="381.4" y1="760.9" x2="390.3" y2="761.1" stroke="#a08888" stroke-opacity="0.31" stroke-width="1"/><line x1="463.6" y1="756.0" x2="486.7" y2="755.9" stroke="#a08888" stroke-opacity="0.30" stroke-width="1"/><line x1="306.0" y1="769.8" x2="334.9" y2="769.8" stroke="#a08888" stroke-opacity="0.25" stroke-width="1"/><line x1="398.0" y1="761.4" x2="404.5" y2="762.0" stroke="#a08888" stroke-opacity="0.19" stroke-width="1"/><line x1="329.7" y1="750.6" x2="341.8" y2="750.9" stroke="#a08888" stroke-opacity="0.16" stroke-width="1"/><line x1="312.9" y1="765.5" x2="323.6" y2="764.9" stroke="#a08888" stroke-opacity="0.27" stroke-width="1"/><line x1="407.0" y1="761.1" x2="429.9" y2="760.6" stroke="#a08888" stroke-opacity="0.32" stroke-width="1"/><line x1="434.6" y1="749.1" x2="443.5" y2="749.1" stroke="#a08888" stroke-opacity="0.25" stroke-width="1"/><line x1="348.8" y1="751.1" x2="364.5" y2="750.6" stroke="#a08888" stroke-opacity="0.27" stroke-width="1"/><line x1="462.8" y1="751.7" x2="482.5" y2="752.0" stroke="#a08888" stroke-opacity="0.18" stroke-width="1"/><line x1="455.9" y1="771.4" x2="471.2" y2="771.3" stroke="#a08888" stroke-opacity="0.32" stroke-width="1"/><line x1="397.0" y1="757.9" x2="425.6" y2="758.2" stroke="#a08888" stroke-opacity="0.22" stroke-width="1"/><line x1="393.5" y1="150" x2="393.5" y2="276" stroke="#3030ff" stroke-width="1"/><path d="M388.5 154.5 L393.5 150.5 L398.5 154.5" stroke="#3030ff" stroke-width="1" fill="none"/><path d="M388.5 271.5 L393.5 275.5 L398.5 271.5" stroke="#3030ff" stroke-width="1" fill="none"/><rect x="383" y="199" width="21" height="14" fill="#ece6dc"/><line x1="393.5" y1="284" x2="393.5" y2="410" stroke="#3030ff" stroke-width="1"/><path d="M388.5 288.5 L393.5 284.5 L398.5 288.5" stroke="#3030ff" stroke-width="1" fill="none"/><path d="M388.5 405.5 L393.5 409.5 L398.5 405.5" stroke="#3030ff" stroke-width="1" fill="none"/><rect x="383" y="333" width="21" height="14" fill="#ece6dc"/><line x1="393.5" y1="418" x2="393.5" y2="545" stroke="#3030ff" stroke-width="1"/><path d="M388.5 422.5 L393.5 418.5 L398.5 422.5" stroke="#3030ff" stroke-width="1" fill="none"/><path d="M388.5 540.5 L393.5 544.5 L398.5 540.5" stroke="#3030ff" stroke-width="1" fill="none"/><rect x="383" y="467" width="21" height="14" fill="#ece6dc"/><line x1="479.5" y1="547" x2="479.5" y2="611" stroke="#3030ff" stroke-width="1"/><path d="M474.5 551.5 L479.5 547.5 L484.5 551.5" stroke="#3030ff" stroke-width="1" fill="none"/><path d="M474.5 606.5 L479.5 610.5 L484.5 606.5" stroke="#3030ff" stroke-width="1" fill="none"/><rect x="469" y="572" width="21" height="14" fill="#ece6dc"/><line x1="479.5" y1="611" x2="479.5" y2="675" stroke="#3030ff" stroke-width="1"/><path d="M474.5 615.5 L479.5 611.5 L484.5 615.5" stroke="#3030ff" stroke-width="1" fill="none"/><path d="M474.5 670.5 L479.5 674.5 L484.5 670.5" stroke="#3030ff" stroke-width="1" fill="none"/><rect x="469" y="636" width="21" height="14" fill="#ece6dc"/><line x1="479.5" y1="675" x2="479.5" y2="740" stroke="#3030ff" stroke-width="1"/><path d="M474.5 679.5 L479.5 675.5 L484.5 679.5" stroke="#3030ff" stroke-width="1" fill="none"/><path d="M474.5 735.5 L479.5 739.5 L484.5 735.5" stroke="#3030ff" stroke-width="1" fill="none"/><rect x="469" y="700" width="21" height="14" fill="#ece6dc"/><path d="M287.5 785 V800 M292.5 785 V800 M496.5 785 V800 M500.5 785 V800 M287 793.5 H501 M287.5 804 V819 M287 811.5 H501" stroke="#000" stroke-width="1" fill="none"/><rect x="417" y="782" width="10" height="11" rx="1" fill="#4b5561"/><path d="M419 783 V779 Q422 774 425 779 V783" stroke="#4b5561" stroke-width="2" fill="none"/></svg>
<div class="a t" style="left:383px;top:200px;font-size:12px;line-height:12px;color:#000;">407</div>
<div class="a t" style="left:383px;top:334px;font-size:12px;line-height:12px;color:#000;">407</div>
<div class="a t" style="left:383px;top:468px;font-size:12px;line-height:12px;color:#000;">407</div>
<div class="a t" style="left:469px;top:573px;font-size:12px;line-height:12px;color:#000;">200</div>
<div class="a t" style="left:469px;top:637px;font-size:12px;line-height:12px;color:#000;">200</div>
<div class="a t" style="left:469px;top:701px;font-size:12px;line-height:12px;color:#000;">200</div>
<div class="a t" style="left:378px;top:782px;font-size:12px;line-height:12px;color:#000;">642.7</div>
<div class="a" style="left:501px;top:114px;width:690px;height:726px;background:#f0f0f0;border:1px solid #9a9a9a;border-radius:8px;box-shadow:0 12px 44px rgba(0,0,0,.24),0 0 10px rgba(0,0,0,.08)"></div>
<div class="a" style="left:502px;top:115px;width:688px;height:26px;background:#f3f3f3;border-radius:7px 7px 0 0"></div>
<div class="a t" style="left:506px;top:122px;font-size:12px;line-height:12px;color:#8a8a8a;transform:scaleX(0.94);transform-origin:0 0;">Poner Extraíble</div>
<svg class="a" style="left:1168px;top:120px;" width="14" height="14" viewBox="0 0 14 14"><path d="M1.5 1.5 L12.5 12.5 M12.5 1.5 L1.5 12.5" stroke="#6a6a6a" stroke-width="1" fill="none"/></svg>
<svg class="a" style="left:500px;top:148px;" width="34" height="20" viewBox="0 0 34 20"><polygon points="6.5,11 12.5,4.5 15.5,3 18,6 17.5,12 14,14" fill="#333"/>
<polygon points="31.5,11 25.5,4.5 22.5,3 20,6 20.5,12 24,14" fill="#333"/>
<polygon points="8,9 12,5.5 12,9 9,11" fill="#8a8a8a" opacity=".8"/><polygon points="30,9 26,5.5 26,9 29,11" fill="#8a8a8a" opacity=".8"/>
<rect x="18" y="6" width="2" height="6" fill="#aaa"/>
<ellipse cx="11" cy="13.3" rx="4" ry="3.5" fill="#b4521a" stroke="#1e1e1e" stroke-width="1.1"/>
<ellipse cx="27" cy="13.3" rx="4" ry="3.5" fill="#b4521a" stroke="#1e1e1e" stroke-width="1.1"/>
<ellipse cx="11" cy="14.5" rx="2.2" ry="1.4" fill="#e8803a" opacity=".8"/><ellipse cx="27" cy="14.5" rx="2.2" ry="1.4" fill="#e8803a" opacity=".8"/></svg>
<div class="a" style="left:538px;top:146px;width:108px;height:27px;background:#fff;border-bottom:1px solid #8a8a8a"></div>
<div class="a" style="left:508px;top:176px;width:139px;height:640px;background:#e0f7fc;border-top:2px solid #6e6e6e;border-left:2px solid #6e6e6e;border-right:1px solid #fff;border-bottom:1px solid #fff;box-shadow:-1px -1px 0 #a0a0a0"></div>
<div class="a t" style="left:514px;top:180px;font-size:15px;line-height:15px;color:#000;transform:scaleX(0.943);transform-origin:0 0;">Datos del Extraíble</div>
<div class="a t" style="left:514px;top:200px;font-size:15px;line-height:15px;color:#000;transform:scaleX(0.943);transform-origin:0 0;">Cajonera</div>
<div class="a t" style="left:514px;top:220px;font-size:15px;line-height:15px;color:#000;transform:scaleX(0.943);transform-origin:0 0;">Luces</div>
<div class="a t" style="left:514px;top:240px;font-size:15px;line-height:15px;color:#000;transform:scaleX(0.943);transform-origin:0 0;">Accesorios</div>
<div class="a t" style="left:658px;top:148px;font-size:18px;line-height:18px;color:#000;font-weight:bold;transform:scaleX(1.035);transform-origin:0 0;">Datos del Extraíble</div>
<div class="a" style="left:661px;top:173px;width:332px;height:108px;border:1px solid #dcdcdc"></div>
<div class="a" style="left:668px;top:170px;width:73.89999999999999px;height:6px;background:#f0f0f0"></div>
<div class="a t" style="left:671px;top:168px;font-size:12px;line-height:12px;color:#000;transform:scaleX(0.875);transform-origin:0 0;">Tipo de Cajón</div>
<svg class="a" style="left:695px;top:185px;" width="300" height="60" viewBox="0 0 300 60">
<polygon points="7,8 16.6,9.7 30.2,7 74.7,18.4 59,26.5" fill="#8e8e8e"/>
<polygon points="30.2,7 74,18 62,23 32,12" fill="#9c9c9c"/>
<path d="M13 10 L59 26.5 L74.7 18.4" stroke="#dadada" stroke-width="1.6" fill="none"/>
<polygon points="7.1,7.8 59,26.5 55.7,52.6 11.2,24.9" fill="#676767"/>
<polygon points="59,26.5 74.7,18.4 73.1,32.5 55.7,52.6" fill="#4e4e4e"/>
<path d="M17 22 Q19 25 24 25.5" stroke="#9a9a9a" stroke-width="1" fill="none"/>
<polygon points="104.9,8.3 131.5,6.2 166.3,15.1 151.1,26" fill="#c8c8c8"/><polygon points="106,9.5 131.5,6.2 140,9.5 118,15" fill="#a4a4a4"/><path d="M106 9 L151.1 26 L166.3 15.1" stroke="#9a9a9a" stroke-width="1" fill="none"/>
<polygon points="151.1,26 166.3,15.1 164.7,24.9 148.9,43.4" fill="#9a9a9a"/>
<polygon points="148.9,43.4 164.7,24.9 164.7,27.5 148.9,46" fill="#111"/>
<polygon points="104.9,8.3 151.1,26 148.9,49.6 110,27.6" fill="#7c7c7c"/>
<polygon points="108.7,13.5 147.8,28.2 147.3,46.1 110.6,27" fill="#5c5c5c"/>
<circle cx="115.5" cy="16" r="1.2" fill="#ddd"/>
<polygon points="216.3,15.1 240.4,8.3 277.7,18.4 265.4,51.5 217.6,27.6" fill="#767676"/>
<polygon points="232.3,21.7 240.4,15.4 275.2,23.8 266.5,34.2" fill="#b6b6b6"/>
<polygon points="217.6,24.9 265.4,45.6 265.4,51.5 217.6,27.6" fill="#484848"/>
<path d="M220 23 L265.4 43 L277 19" stroke="#a8a8a8" stroke-width="1" fill="none"/>
<polygon points="265.4,36.3 277.7,18.4 277.7,22 265.4,51.5" fill="#1a1a1a"/>
</svg>
<svg class="a" style="left:699.5px;top:254.0px;" width="14" height="14" viewBox="0 0 14 14"><circle cx="7" cy="7" r="6.5" fill="#0067c0"/><circle cx="7" cy="7" r="2.6" fill="#fff"/></svg>
<div class="a t" style="left:717px;top:256px;font-size:12px;line-height:12px;color:#000;transform:scaleX(0.875);transform-origin:0 0;">Standard</div>
<svg class="a" style="left:796.5px;top:254.0px;" width="14" height="14" viewBox="0 0 14 14"><circle cx="7" cy="7" r="6" fill="none" stroke="#3a3a3a" stroke-width="1"/></svg>
<div class="a t" style="left:813px;top:256px;font-size:12px;line-height:12px;color:#000;transform:scaleX(0.875);transform-origin:0 0;">Vidriado</div>
<svg class="a" style="left:916.5px;top:254.0px;" width="14" height="14" viewBox="0 0 14 14"><circle cx="7" cy="7" r="6" fill="none" stroke="#3a3a3a" stroke-width="1"/></svg>
<div class="a t" style="left:934px;top:256px;font-size:12px;line-height:12px;color:#000;transform:scaleX(0.875);transform-origin:0 0;">Mixto</div>
<svg class="a" style="left:1000px;top:177.0px;" width="13" height="13" viewBox="0 0 13 13"><rect x="0.6" y="0.6" width="11.8" height="11.8" rx="2.8" fill="none" stroke="#606060" stroke-width="1.2"/></svg>
<div class="a t" style="left:1016px;top:178px;font-size:12px;line-height:12px;color:#000;transform:scaleX(0.875);transform-origin:0 0;">Frente a Contraveta</div>
<svg class="a" style="left:1000px;top:200.0px;" width="13" height="13" viewBox="0 0 13 13"><rect x="0" y="0" width="13" height="13" rx="3" fill="#0062be"/><path d="M3 7 L5.3 9.3 L10 4.3" stroke="#e4ecf6" stroke-width="1" fill="none"/></svg>
<div class="a t" style="left:1016px;top:201px;font-size:12px;line-height:12px;color:#000;transform:scaleX(0.875);transform-origin:0 0;">Sin Estante Superior</div>
<svg class="a" style="left:1000px;top:223.0px;" width="13" height="13" viewBox="0 0 13 13"><rect x="0.6" y="0.6" width="11.8" height="11.8" rx="2.8" fill="none" stroke="#606060" stroke-width="1.2"/></svg>
<div class="a t" style="left:1016px;top:224px;font-size:12px;line-height:12px;color:#000;transform:scaleX(0.875);transform-origin:0 0;">Cajones a 45°</div>
<svg class="a" style="left:1000px;top:245.0px;" width="13" height="13" viewBox="0 0 13 13"><rect x="0.6" y="0.6" width="11.8" height="11.8" rx="2.8" fill="none" stroke="#606060" stroke-width="1.2"/></svg>
<div class="a t" style="left:1016px;top:246px;font-size:12px;line-height:12px;color:#000;transform:scaleX(0.875);transform-origin:0 0;">Altura Fija</div>
<svg class="a" style="left:1000px;top:268.0px;" width="13" height="13" viewBox="0 0 13 13"><rect x="0.6" y="0.6" width="11.8" height="11.8" rx="2.8" fill="none" stroke="#606060" stroke-width="1.2"/></svg>
<div class="a t" style="left:1016px;top:269px;font-size:12px;line-height:12px;color:#000;transform:scaleX(0.875);transform-origin:0 0;">Estante superior con vidrio</div>
<div class="a" style="left:661px;top:296px;width:519px;height:172px;border:1px solid #dcdcdc"></div>
<div class="a" style="left:667px;top:293px;width:42.1px;height:6px;background:#f0f0f0"></div>
<div class="a t" style="left:670px;top:291px;font-size:12px;line-height:12px;color:#000;transform:scaleX(0.875);transform-origin:0 0;">Cajones</div>
<div class="a t" style="left:700px;top:312px;font-size:12px;line-height:12px;color:#000;transform:scaleX(0.875);transform-origin:0 0;">Modelo</div>
<div class="a" style="left:757px;top:308px;width:407px;height:37px;background:#fff;border:1px solid #7a7a7a;border-radius:3px;border-bottom-color:#6a6a6a"></div>
<div class="a t" style="left:760px;top:312px;font-size:12px;line-height:12px;color:#000;font-weight:bold;transform:scaleX(0.97);transform-origin:0 0;">CAJ150_A</div>
<div class="a t" style="left:760px;top:327px;font-size:11px;line-height:11px;color:#000;transform:scaleX(0.97);transform-origin:0 0;">CAJON CIEGO ALTURA 150 (W)</div>
<div class="a" style="left:1092px;top:311px;width:1px;height:31px;background:#c060c0"></div>
<svg class="a" style="left:1150px;top:323px;" width="12" height="8" viewBox="0 0 12 8"><path d="M1.5 1.5 L6 6 L10.5 1.5" fill="none" stroke="#444" stroke-width="1"/></svg>
<div class="a t" style="left:700px;top:351px;font-size:12px;line-height:12px;color:#000;transform:scaleX(0.875);transform-origin:0 0;">Guía</div>
<div class="a" style="left:757px;top:347px;width:407px;height:37px;background:#fff;border:1px solid #7a7a7a;border-radius:3px;border-bottom-color:#6a6a6a"></div>
<div class="a t" style="left:760px;top:351px;font-size:12px;line-height:12px;color:#000;font-weight:bold;transform:scaleX(1.05);transform-origin:0 0;">433.10.550</div>
<div class="a t" style="left:760px;top:366px;font-size:11px;line-height:11px;color:#000;transform:scaleX(0.97);transform-origin:0 0;">Guia Oculta&nbsp; c/Smuso 25kg Ac.Gal.500mm</div>
<div class="a" style="left:1092px;top:350px;width:1px;height:31px;background:#c060c0"></div>
<svg class="a" style="left:1150px;top:362px;" width="12" height="8" viewBox="0 0 12 8"><path d="M1.5 1.5 L6 6 L10.5 1.5" fill="none" stroke="#444" stroke-width="1"/></svg>
<div class="a t" style="left:700px;top:392px;font-size:12px;line-height:12px;color:#000;transform:scaleX(0.875);transform-origin:0 0;">Manija</div>
<div class="a" style="left:757px;top:388px;width:407px;height:37px;background:#fff;border:1px solid #7a7a7a;border-radius:3px;border-bottom-color:#6a6a6a"></div>
<div class="a t" style="left:760px;top:392px;font-size:12px;line-height:12px;color:#000;font-weight:bold;transform:scaleX(1.0);transform-origin:0 0;">FASH</div>
<div class="a t" style="left:760px;top:407px;font-size:11px;line-height:11px;color:#000;transform:scaleX(0.97);transform-origin:0 0;">FRENTE ABIERTO SIN HERRAJE</div>
<div class="a" style="left:1092px;top:391px;width:1px;height:31px;background:#c060c0"></div>
<svg class="a" style="left:1150px;top:403px;" width="12" height="8" viewBox="0 0 12 8"><path d="M1.5 1.5 L6 6 L10.5 1.5" fill="none" stroke="#444" stroke-width="1"/></svg>
<div class="a t" style="left:700px;top:432px;font-size:12px;line-height:12px;color:#000;transform:scaleX(0.875);transform-origin:0 0;">Frente</div>
<div class="a" style="left:757px;top:428px;width:407px;height:37px;background:#fff;border:1px solid #7a7a7a;border-radius:3px;border-bottom-color:#6a6a6a"></div>
<div class="a t" style="left:760px;top:432px;font-size:12px;line-height:12px;color:#000;font-weight:bold;transform:scaleX(1.08);transform-origin:0 0;">H1122</div>
<div class="a t" style="left:760px;top:447px;font-size:11px;line-height:11px;color:#000;transform:scaleX(0.97);transform-origin:0 0;">Whitewood 18 mm</div>
<div class="a" style="left:1092px;top:431px;width:1px;height:31px;background:#c060c0"></div>
<svg class="a" style="left:1150px;top:443px;" width="12" height="8" viewBox="0 0 12 8"><path d="M1.5 1.5 L6 6 L10.5 1.5" fill="none" stroke="#444" stroke-width="1"/></svg>
<svg class="a" style="left:1100px;top:320px;" width="34" height="18" viewBox="0 0 34 18"><polygon points="0,3 10,1 32,6 32,11 20,16 0,11" fill="#fff"/><polygon points="0,3 20,8 20,16 0,11" fill="#4a3a30"/><polygon points="20,8 32,5 32,11 20,16" fill="#8a8a8a"/><polygon points="0,3 12,0 32,5 20,8" fill="#e8e8e8" stroke="#777" stroke-width=".5"/><path d="M8 9 H12" stroke="#aaa"/></svg>
<svg class="a" style="left:1100px;top:355px;" width="32" height="20" viewBox="0 0 32 20"><path d="M2 13 L27 3 M6 16 L31 6" stroke="#6a8898" stroke-width="2"/><path d="M2 13 L27 3 M6 16 L31 6" stroke="#d0e0e8" stroke-width=".8"/><circle cx="3" cy="13" r="1.6" fill="#c02020"/><circle cx="8" cy="17" r="1.6" fill="#c02020"/></svg>
<svg class="a" style="left:1100px;top:391px;" width="40" height="32" viewBox="0 0 40 32"><rect width="40" height="32" fill="#d8a050"/><polygon points="0,0 7,0 10,32 0,32" fill="#a0a0a0"/><polygon points="4,0 10,0 14,32 8,32" fill="#c08030"/><rect x="14" y="0" width="26" height="7" fill="#e0b060"/><path d="M16 12 L38 6 M16 20 L38 13 M16 27 L38 20" stroke="#909090" stroke-width="1.2"/></svg>
<svg class="a" style="left:1100px;top:431px;" width="32" height="32" viewBox="0 0 32 32"><rect width="32" height="32" fill="#e4e2d8"/><path d="M5 0 V32 M12 0 V32 M20 0 V32 M27 0 V32" stroke="#d4d2c4" stroke-width="2"/></svg>
<div class="a t" style="left:665px;top:499px;font-size:12px;line-height:12px;color:#000;transform:scaleX(0.875);transform-origin:0 0;">Cantidad de Cajones</div>
<div class="a" style="left:791px;top:494px;width:58px;height:22px;background:#fff;border:1px solid #e0e0e0;border-bottom:1px solid #868686;border-radius:2px"></div>
<div class="a t" style="left:794px;top:497px;font-size:12px;line-height:12px;color:#000;">1</div>
<div class="a t" style="left:688px;top:533px;font-size:12px;line-height:12px;color:#000;transform:scaleX(0.875);transform-origin:0 0;">Altura del Cajón</div>
<div class="a" style="left:791px;top:528px;width:58px;height:22px;background:#fff;border:1px solid #e0e0e0;border-bottom:1px solid #868686;border-radius:2px"></div>
<div class="a t" style="left:794px;top:531px;font-size:12px;line-height:12px;color:#000;">150</div>
<div class="a t" style="left:688px;top:564px;font-size:12px;line-height:12px;color:#000;transform:scaleX(0.875);transform-origin:0 0;">Ancho del Cajón</div>
<div class="a" style="left:790px;top:560px;width:60px;height:21px;background:#fff;border:1px solid #bcbcbc;border-radius:2px"></div>
<div class="a" style="left:793px;top:563px;width:37px;height:14px;background:#efefef"></div>
<div class="a" style="left:793px;top:563px;width:28px;height:13px;background:#0078d7"></div>
<div class="a t" style="left:794px;top:564px;font-size:12px;line-height:12px;color:#7a6a5a;transform:scaleX(0.86);transform-origin:0 0;">642.7</div>
<svg class="a" style="left:836px;top:567px;" width="12" height="8" viewBox="0 0 12 8"><path d="M1.5 1.5 L5.5 5.5 L9.5 1.5" fill="none" stroke="#a0a0a0" stroke-width="1"/></svg>
<div class="a t" style="left:1046px;top:515px;font-size:12px;line-height:12px;color:#000;transform:scaleX(0.875);transform-origin:0 0;">Ajuste Der</div>
<div class="a" style="left:1109px;top:510px;width:58px;height:21px;background:#f0f0f0;border:1px solid #e2e2e2"></div>
<div class="a t" style="left:1112px;top:513px;font-size:12px;line-height:12px;color:#8a8a8a;">0</div>
<div class="a t" style="left:1045px;top:558px;font-size:12px;line-height:12px;color:#000;transform:scaleX(0.875);transform-origin:0 0;">Ajuste Izq</div>
<div class="a" style="left:1109px;top:553px;width:58px;height:21px;background:#f0f0f0;border:1px solid #e2e2e2"></div>
<div class="a t" style="left:1112px;top:556px;font-size:12px;line-height:12px;color:#8a8a8a;">0</div>
<div class="a t" style="left:920px;top:604px;font-size:12px;line-height:12px;color:#000;transform:scaleX(0.875);transform-origin:0 0;">Con Ajustes</div>
<svg class="a" style="left:996.0px;top:602.0px;" width="14" height="14" viewBox="0 0 14 14"><circle cx="7" cy="7" r="6" fill="none" stroke="#3a3a3a" stroke-width="1"/></svg>
<div class="a" style="left:662px;top:629px;width:518px;height:172px;border:1px solid #dcdcdc"></div>
<div class="a" style="left:667px;top:626px;width:105.7px;height:6px;background:#f0f0f0"></div>
<div class="a t" style="left:670px;top:624px;font-size:12px;line-height:12px;color:#000;transform:scaleX(0.875);transform-origin:0 0;">Adaptación al Hueco</div>
<div class="a t" style="left:670px;top:776px;font-size:12px;line-height:12px;color:#000;transform:scaleX(0.875);transform-origin:0 0;">Adaptar Hueco</div>
<svg class="a" style="left:777.0px;top:774.0px;" width="14" height="14" viewBox="0 0 14 14"><circle cx="7" cy="7" r="6.5" fill="#0067c0"/><circle cx="7" cy="7" r="2.6" fill="#fff"/></svg>
<div class="a t" style="left:857px;top:776px;font-size:12px;line-height:12px;color:#000;transform:scaleX(0.875);transform-origin:0 0;">Cajonera a Izquierda</div>
<svg class="a" style="left:964.0px;top:774.0px;" width="14" height="14" viewBox="0 0 14 14"><circle cx="7" cy="7" r="6" fill="none" stroke="#3a3a3a" stroke-width="1"/></svg>
<div class="a t" style="left:1037px;top:776px;font-size:12px;line-height:12px;color:#000;transform:scaleX(0.875);transform-origin:0 0;">Cajonera a Derecha</div>
<svg class="a" style="left:1144.0px;top:774.0px;" width="14" height="14" viewBox="0 0 14 14"><circle cx="7" cy="7" r="6" fill="none" stroke="#3a3a3a" stroke-width="1"/></svg>
<div class="a" style="left:960px;top:814px;width:72px;height:20px;background:#fdfdfd;border:1px solid #d0d0d0;border-bottom-color:#b8b8b8;border-radius:3px"></div>
<div class="a t" style="left:989px;top:818px;font-size:12px;line-height:12px;color:#000;transform:scaleX(0.875);transform-origin:0 0;">OK</div>
<div class="a" style="left:1043px;top:814px;width:73px;height:20px;background:#fdfdfd;border:1px solid #d0d0d0;border-bottom-color:#b8b8b8;border-radius:3px"></div>
<div class="a t" style="left:1063px;top:818px;font-size:12px;line-height:12px;color:#000;transform:scaleX(0.875);transform-origin:0 0;">Cancel</div>
<svg class="a" style="left:670px;top:644px;" width="120" height="119" viewBox="0 0 120 119"><rect width="120" height="119" fill="#e6e6e2"/><polygon points="25,0 83,0 83,10 27.9,20.4" fill="#e2e2de"/>
<polygon points="0,0 25,0 31.5,119 8.5,91" fill="#686868"/>
<polygon points="0,20 8.5,91 31.5,119 0,119" fill="#e4e4e0"/>
<polygon points="83.2,0 118,0 118,65 115,27 83.2,10.2" fill="#686868"/>
<polygon points="118,0 120,0 120,119 110,119 110,89 118,65" fill="#e0e0dc"/>
<line x1="26.5" y1="0" x2="32.5" y2="118" stroke="#999" stroke-width=".8" stroke-dasharray="1.5,1.2"/>
<polygon points="27.9,20.4 83.2,10.2 115,27 29,47" fill="#ebebe7"/>
<path d="M29 46 L115 26" stroke="#777" stroke-width=".8"/>
<line x1="114" y1="27" x2="110" y2="89" stroke="#999" stroke-width=".8"/><polygon points="29,47 115,27 110,89.5 33,118.4" fill="#dcdcd8"/><line x1="29.0" y1="47" x2="115.0" y2="27" stroke="#5a5a5a" stroke-width=".9"/><line x1="29.8" y1="63.7" x2="114.0" y2="41.5" stroke="#5a5a5a" stroke-width=".9"/><line x1="30.6" y1="78.1" x2="113.0" y2="54.7" stroke="#5a5a5a" stroke-width=".9"/><line x1="31.4" y1="91.9" x2="112.0" y2="66.7" stroke="#5a5a5a" stroke-width=".9"/><line x1="32.2" y1="105.2" x2="111.0" y2="78.7" stroke="#5a5a5a" stroke-width=".9"/><line x1="33.0" y1="118.4" x2="110.0" y2="89.5" stroke="#5a5a5a" stroke-width=".9"/><path d="M29 47 L33 118.4" stroke="#777" stroke-width=".8" stroke-dasharray="1.5,1"/><circle cx="76" cy="45" r="1" fill="#555"/><circle cx="76" cy="59.5" r="1" fill="#555"/><circle cx="76" cy="72.7" r="1" fill="#555"/><circle cx="76" cy="85.3" r="1" fill="#555"/><circle cx="76" cy="97.4" r="1" fill="#555"/></svg>
<svg class="a" style="left:905px;top:479px;" width="120" height="119" viewBox="0 0 120 119"><rect width="120" height="119" fill="#e6e6e2"/><polygon points="0,0 24.5,0 31,118 8,91.5" fill="#686868"/>
<polygon points="0,20 8,91.5 31,119 0,119" fill="#e4e4e0"/>
<polygon points="93.7,0 120,0 120,65 113.5,67.5 116.8,11.6 93.7,0.9" fill="#686868"/>
<polygon points="120,65 120,119 100,119 110,88 113.5,67.5" fill="#e2e2de"/>
<polygon points="25.4,0.9 93.7,0.9 116.8,10.8 28.7,29.7" fill="#ebebe7"/>
<polygon points="28.7,29.7 43.5,29.7 46,112 31,117.9" fill="#e0e0dc"/>
<polygon points="104.4,15.7 116.8,10.8 110.2,88.2 100.3,89.8" fill="#e0e0dc"/>
<path d="M28.7 29.7 L116.8 10.8 M31 117.9 L110 88" stroke="#888" stroke-width=".8"/>
<line x1="27" y1="1" x2="33" y2="118" stroke="#999" stroke-width=".8" stroke-dasharray="1.5,1.2"/>
<line x1="107" y1="15" x2="103" y2="89" stroke="#999" stroke-width=".8" stroke-dasharray="1.5,1.2"/><polygon points="43.5,29.7 104.4,15.7 100.3,89.8 46,112" fill="#dcdcd8"/><line x1="43.5" y1="29.7" x2="104.4" y2="15.7" stroke="#5a5a5a" stroke-width=".9"/><line x1="43.9" y1="44.5" x2="103.7" y2="30.5" stroke="#5a5a5a" stroke-width=".9"/><line x1="44.3" y1="58.5" x2="103.0" y2="44.5" stroke="#5a5a5a" stroke-width=".9"/><line x1="44.8" y1="72.5" x2="102.3" y2="57.7" stroke="#5a5a5a" stroke-width=".9"/><line x1="45.2" y1="85.7" x2="101.7" y2="70" stroke="#5a5a5a" stroke-width=".9"/><line x1="45.6" y1="98" x2="101.0" y2="81.6" stroke="#5a5a5a" stroke-width=".9"/><line x1="46.0" y1="112" x2="100.3" y2="89.8" stroke="#5a5a5a" stroke-width=".9"/><path d="M43.5 29.7 L46 112" stroke="#777" stroke-width=".8" stroke-dasharray="1.5,1"/><circle cx="76.4" cy="29.7" r="1" fill="#555"/><circle cx="76.4" cy="44.5" r="1" fill="#555"/><circle cx="76.4" cy="58.5" r="1" fill="#555"/><circle cx="76.4" cy="72" r="1" fill="#555"/><circle cx="76.4" cy="84.9" r="1" fill="#555"/><circle cx="76.4" cy="97.3" r="1" fill="#555"/></svg>
<svg class="a" style="left:857px;top:644px;" width="120" height="119" viewBox="0 0 120 119"><rect width="120" height="119" fill="#e6e6e2"/><polygon points="24.6,0 83,0 83,19.5 69.8,12.6 29,20.5" fill="#e2e2de"/>
<polygon points="0,0 24.6,0 31.7,118 9.6,90.5" fill="#686868"/>
<polygon points="0,18 9.6,90.5 31.7,119 0,119" fill="#e4e4e0"/>
<polygon points="83,0 119.4,0 118.5,4 110.5,88 105.5,86 101.7,29.4 83,19.5" fill="#686868"/>
<polygon points="118.5,4 120,0 120,62 113,64" fill="#e0e0dc"/>
<polygon points="29,20.5 69.8,12.6 101.7,29.4 30,47.1" fill="#ebebe7"/>
<path d="M30 46.3 L100.8 30.4" stroke="#777" stroke-width=".8"/>
<line x1="100.8" y1="31" x2="96.4" y2="93" stroke="#999" stroke-width=".8"/>
<line x1="96.4" y1="93.2" x2="120" y2="83" stroke="#c8b8b0" stroke-width=".6"/>
<line x1="26.5" y1="0" x2="33" y2="118" stroke="#999" stroke-width=".8" stroke-dasharray="1.5,1.2"/><polygon points="30,47.1 100.8,31.2 96.4,93.2 33.5,118" fill="#dcdcd8"/><line x1="30.0" y1="47.1" x2="100.8" y2="31.2" stroke="#5a5a5a" stroke-width=".9"/><line x1="30.7" y1="63" x2="99.9" y2="46.2" stroke="#5a5a5a" stroke-width=".9"/><line x1="31.4" y1="77.2" x2="99.0" y2="58.6" stroke="#5a5a5a" stroke-width=".9"/><line x1="32.1" y1="90.5" x2="98.2" y2="71" stroke="#5a5a5a" stroke-width=".9"/><line x1="32.8" y1="103.8" x2="97.3" y2="82.5" stroke="#5a5a5a" stroke-width=".9"/><line x1="33.5" y1="118" x2="96.4" y2="93.2" stroke="#5a5a5a" stroke-width=".9"/><path d="M30 47.1 L33.5 118" stroke="#777" stroke-width=".8" stroke-dasharray="1.5,1"/><circle cx="68" cy="47.1" r="1" fill="#555"/><circle cx="68" cy="61.3" r="1" fill="#555"/><circle cx="68" cy="74.6" r="1" fill="#555"/><circle cx="68" cy="87.9" r="1" fill="#555"/><circle cx="68" cy="99.4" r="1" fill="#555"/></svg>
<svg class="a" style="left:1037px;top:644px;" width="120" height="119" viewBox="0 0 120 119"><rect width="120" height="119" fill="#e6e6e2"/><polygon points="36.8,0 94.4,0 93.5,12.6 49.2,12.6 18.2,29.4 37.7,17.9" fill="#e2e2de"/>
<polygon points="0.5,0 36.8,0 37.7,17.9 18.2,29.4 14.7,88.7 10.3,88.7" fill="#686868"/>
<polygon points="94.4,0 120,0 113,90.5 88.2,118 91,46" fill="#686868"/>
<polygon points="113,90.5 120,88 120,119 88,119" fill="#e4e4e0"/>
<polygon points="49.2,12.6 93.5,12.6 90,46.2 18.2,29.4" fill="#ebebe7"/>
<path d="M18.2 29.4 L90 46.2" stroke="#777" stroke-width=".8"/>
<line x1="0.5" y1="85" x2="88" y2="118" stroke="#c8b8b0" stroke-width=".6"/>
<line x1="93" y1="0" x2="90" y2="46" stroke="#999" stroke-width=".8" stroke-dasharray="1.5,1.2"/><polygon points="19.1,30.3 90,47.1 86.4,118 23.5,94" fill="#dcdcd8"/><line x1="19.1" y1="30.3" x2="90.0" y2="47.1" stroke="#5a5a5a" stroke-width=".9"/><line x1="20.0" y1="45.3" x2="89.3" y2="61.3" stroke="#5a5a5a" stroke-width=".9"/><line x1="20.9" y1="58.6" x2="88.6" y2="75.5" stroke="#5a5a5a" stroke-width=".9"/><line x1="21.7" y1="71" x2="87.8" y2="87.9" stroke="#5a5a5a" stroke-width=".9"/><line x1="22.6" y1="83.4" x2="87.1" y2="99.4" stroke="#5a5a5a" stroke-width=".9"/><line x1="23.5" y1="94" x2="86.4" y2="118" stroke="#5a5a5a" stroke-width=".9"/><path d="M19.1 30.3 L23.5 94" stroke="#777" stroke-width=".8" stroke-dasharray="1.5,1"/><circle cx="51.7" cy="47.3" r="1" fill="#555"/><circle cx="51.7" cy="61.4" r="1" fill="#555"/><circle cx="51.7" cy="74.8" r="1" fill="#555"/><circle cx="51.7" cy="87.9" r="1" fill="#555"/><circle cx="51.7" cy="99.7" r="1" fill="#555"/></svg>
</body></html>
